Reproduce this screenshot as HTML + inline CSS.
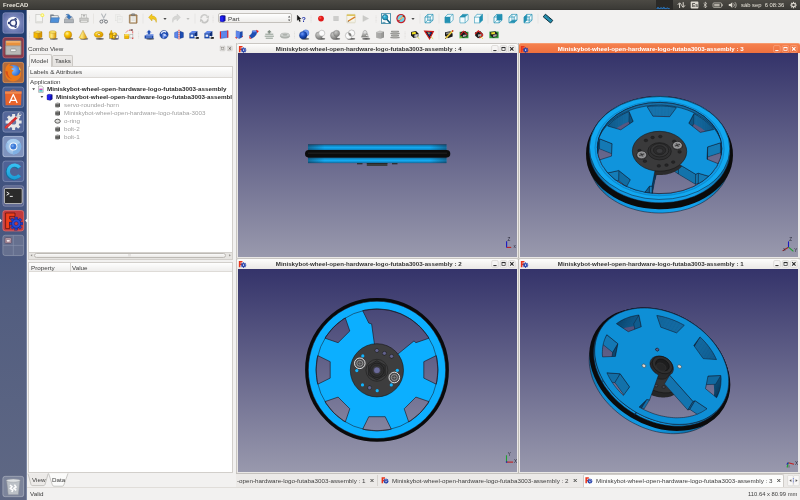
<!DOCTYPE html><html><head><meta charset="utf-8"><title>FreeCAD</title><style>
*{box-sizing:border-box;margin:0;padding:0}
html,body{width:800px;height:500px;overflow:hidden;background:#f2f1f0;font-family:"Liberation Sans",sans-serif;font-size:6.25px;color:#3c3c3c}
.abs{position:absolute}
#panel{position:absolute;left:0;top:0;width:800px;height:10px;background:linear-gradient(#4c4a44,#3c3b37 85%,#33322f);}
.txt{position:absolute;white-space:nowrap;line-height:8px;height:8px;will-change:transform}
.b{font-weight:bold;color:#2b2b2b}
.g{color:#9f9f9f}
.view{position:absolute;background:linear-gradient(#34336a 0%,#9999ad 100%);overflow:hidden}
.mt{position:absolute;background:linear-gradient(#fdfdfc,#eae8e6);border-radius:2px 2px 0 0;border-top:0.6px solid #c9c6c2}
.mt.act{background:linear-gradient(#f5814e,#ee6f3e);border-top:0.6px solid #f79a6e}
.mt .tt{position:absolute;top:1.1px;left:8px;right:25.5px;text-align:center;font-weight:bold;color:#333;font-size:6.17px;line-height:8px;white-space:nowrap;will-change:transform}
.mt.act .tt{color:#fff}
</style></head><body>
<div id="panel"><div class="txt" style="left:3px;top:1.1px;font-weight:bold;color:#e9e5dc;font-size:5.9px;">FreeCAD</div>
<div class="abs" style="left:655.6px;top:0;width:17px;height:10px;background:#2a2927"></div>
<div class="txt" style="left:741.3px;top:1.3px;color:#e8e4da;font-size:5.85px;">sáb sep&nbsp; 6 08:36</div>
<svg class="abs" style="left:650px;top:0" width="150" height="10" viewBox="650 0 150 10"><path d="M656.5,8.6h1v-1h1v1h2v-0.8h1.2v0.8h1.6v-1.2h1v1.2h2.4v-0.6h1.4v0.6h1.6" stroke="#2a7fd0" stroke-width="0.9" fill="none"/><path d="M679.6,8V3.4M677.8,4.8l1.8,-2l1.8,2" stroke="#dfdbd2" stroke-width="1" fill="none"/><path d="M683.2,2.2V6.8M681.4,5.4l1.8,2l1.8,-2" stroke="#dfdbd2" stroke-width="1" fill="none"/><rect x="690.7" y="1.6" width="7.7" height="7" rx="0.8" fill="#dfdbd2"/><text x="692" y="7.2" font-family="Liberation Sans" font-size="5" font-weight="bold" fill="#3c3b37">Es</text><path d="M703.6,3.4l3.2,3l-1.6,1.6v-6l1.6,1.6l-3.2,3" stroke="#dfdbd2" stroke-width="0.7" fill="none"/><rect x="713" y="2.9" width="8.6" height="4.5" rx="1" fill="none" stroke="#cfcbc2" stroke-width="0.7"/><rect x="714.2" y="3.9" width="5.4" height="2.5" fill="#b5b1a8"/><rect x="721.8" y="4.2" width="0.8" height="1.9" fill="#cfcbc2"/><path d="M728.8,4.1h1.5l2,-1.9v5.8l-2,-1.9h-1.5z" fill="#dfdbd2"/><path d="M733.6,3.4a2.4,2.4 0 0 1 0,3.4M734.9,2.2a4,4 0 0 1 0,5.8" stroke="#dfdbd2" stroke-width="0.7" fill="none"/><rect x="-0.6" y="-3.2" width="1.2" height="1.4" fill="#dfdbd2" transform="translate(793.5,5.1) rotate(0)"/><rect x="-0.6" y="-3.2" width="1.2" height="1.4" fill="#dfdbd2" transform="translate(793.5,5.1) rotate(45)"/><rect x="-0.6" y="-3.2" width="1.2" height="1.4" fill="#dfdbd2" transform="translate(793.5,5.1) rotate(90)"/><rect x="-0.6" y="-3.2" width="1.2" height="1.4" fill="#dfdbd2" transform="translate(793.5,5.1) rotate(135)"/><rect x="-0.6" y="-3.2" width="1.2" height="1.4" fill="#dfdbd2" transform="translate(793.5,5.1) rotate(180)"/><rect x="-0.6" y="-3.2" width="1.2" height="1.4" fill="#dfdbd2" transform="translate(793.5,5.1) rotate(225)"/><rect x="-0.6" y="-3.2" width="1.2" height="1.4" fill="#dfdbd2" transform="translate(793.5,5.1) rotate(270)"/><rect x="-0.6" y="-3.2" width="1.2" height="1.4" fill="#dfdbd2" transform="translate(793.5,5.1) rotate(315)"/><circle cx="793.5" cy="5.1" r="1.8" fill="none" stroke="#dfdbd2" stroke-width="1.1"/></svg>
</div>
<svg class="abs" style="left:0;top:10px" width="27" height="490" viewBox="0 10 27 490"><defs><linearGradient id="lbg" x1="0" y1="0" x2="0" y2="1"><stop offset="0" stop-color="#1d386a"/><stop offset="0.12" stop-color="#294577"/><stop offset="0.35" stop-color="#42537f"/><stop offset="0.6" stop-color="#535e80"/><stop offset="1" stop-color="#5f6884"/></linearGradient><radialGradient id="t1" cx="0.5" cy="0.5" r="0.75"><stop offset="0" stop-color="#a0aad6"/><stop offset="0.6" stop-color="#6a78b0"/><stop offset="1" stop-color="#4e5f9c"/></radialGradient><radialGradient id="ffg" cx="0.45" cy="0.35" r="0.7"><stop offset="0" stop-color="#8fc0ff"/><stop offset="0.6" stop-color="#3a78d8"/><stop offset="1" stop-color="#1c3f9a"/></radialGradient><radialGradient id="chg" cx="0.5" cy="0.5" r="0.5"><stop offset="0" stop-color="#d6e8fa"/><stop offset="1" stop-color="#8ab4e2"/></radialGradient><linearGradient id="cg" x1="0" y1="0" x2="0" y2="1"><stop offset="0" stop-color="#38c4f4"/><stop offset="1" stop-color="#1a9ad6"/></linearGradient></defs><rect x="0" y="10" width="27" height="490" fill="url(#lbg)"/><rect x="26.2" y="10" width="0.8" height="490" fill="#8d98b4" opacity="0.8"/><rect x="2.6" y="12.5" width="21.4" height="21" rx="2.6" fill="url(#t1)"/><rect x="2.9" y="12.8" width="20.8" height="20.4" rx="2.4" fill="none" stroke="#ffffff" stroke-opacity="0.35" stroke-width="0.6"/><circle cx="13.3" cy="23" r="6.3" fill="#fafafc"/><circle cx="13.3" cy="23" r="3.1" fill="none" stroke="#2a3a76" stroke-width="1.4"/><circle cx="9" cy="23" r="1.2" fill="#2a3a76"/><circle cx="15.5" cy="19.3" r="1.2" fill="#2a3a76"/><circle cx="15.5" cy="26.7" r="1.2" fill="#2a3a76"/><path d="M10.2,23h1.2M14.6,20.6l0.6,-1M14.6,25.4l0.6,1" stroke="#fafafc" stroke-width="0.7"/><rect x="2.6" y="37.2" width="21.4" height="21" rx="2.6" fill="#8c3b4b"/><rect x="2.9" y="37.5" width="20.8" height="20.4" rx="2.4" fill="none" stroke="#e0a0a8" stroke-opacity="0.6" stroke-width="0.6"/><rect x="5.4" y="40.6" width="15.8" height="14.4" rx="1" fill="#a9a9a7" stroke="#6a6a68" stroke-width="0.5"/><rect x="6.2" y="41.2" width="14.2" height="4.4" fill="#e8903c"/><rect x="6.2" y="41.2" width="14.2" height="1.4" fill="#f4b878"/><rect x="5.8" y="46" width="15" height="8.6" rx="0.6" fill="#b9b9b7" stroke="#8a8a88" stroke-width="0.4"/><rect x="10.6" y="49" width="5.4" height="2.6" rx="0.8" fill="#f2f2f0" stroke="#777" stroke-width="0.5"/><rect x="2.6" y="62" width="21.4" height="21" rx="2.6" fill="#b26b3c"/><rect x="2.9" y="62.3" width="20.8" height="20.4" rx="2.4" fill="none" stroke="#f0c090" stroke-opacity="0.6" stroke-width="0.6"/><circle cx="13.6" cy="72" r="7" fill="url(#ffg)"/><path d="M5.4,70c0,-4 3,-6.4 5.4,-6.6c-1.2,1 -1.4,2 -1.2,2.8c1.6,-0.6 3.6,0 4.2,1.2c-1.6,0 -2.6,0.8 -2.6,1.8c0.8,0.6 2,0.6 2.6,1.6c-1,0.2 -2,1 -2,2.2c0,1.6 1.6,2.8 3.6,2.8c2.6,0 4.8,-2 5.2,-5c0.8,2 0.6,4.8 -0.6,6.8c-1.4,2.4 -4,3.8 -6.8,3.8c-4.6,0 -7.8,-3.6 -7.8,-7.4c0,-1.2 0,-2.6 0,-4z" fill="#ee7a18"/><path d="M5.4,71c0.4,4 2.6,7.2 6.6,8c-3,-1.4 -4.4,-4 -4.2,-7.4z" fill="#d8501a"/><path d="M18.4,66.4c1.6,1.2 2.6,3 2.8,5c-0.6,-1 -1.4,-1.6 -2.2,-1.8c0.2,-1.2 0,-2.2 -0.6,-3.2z" fill="#f8c030"/><rect x="2.6" y="86.7" width="21.4" height="21" rx="2.6" fill="#4a5f92"/><rect x="2.9" y="87.0" width="20.8" height="20.4" rx="2.4" fill="none" stroke="#ffffff" stroke-opacity="0.35" stroke-width="0.6"/><path d="M10,92.4c0,-3 6.6,-3 6.6,0" fill="none" stroke="#e8703a" stroke-width="1"/><path d="M5,91.6h16.6l-0.6,13.6h-15.4z" fill="#e8632a"/><path d="M5,91.6h16.6l-0.1,2.2h-16.4z" fill="#f08a50"/><path d="M9.4,103l3.9,-8.4l3.9,8.4M10.6,100.4h5.4" fill="none" stroke="#fff" stroke-width="1.3" stroke-linejoin="round"/><rect x="2.6" y="111.4" width="21.4" height="21" rx="2.6" fill="#54679a"/><rect x="2.9" y="111.7" width="20.8" height="20.4" rx="2.4" fill="none" stroke="#ffffff" stroke-opacity="0.35" stroke-width="0.6"/><rect x="-1.5" y="-8" width="3" height="3.2" fill="#e4e4e4" transform="translate(13.6,122) rotate(0)"/><rect x="-1.5" y="-8" width="3" height="3.2" fill="#e4e4e4" transform="translate(13.6,122) rotate(45)"/><rect x="-1.5" y="-8" width="3" height="3.2" fill="#e4e4e4" transform="translate(13.6,122) rotate(90)"/><rect x="-1.5" y="-8" width="3" height="3.2" fill="#e4e4e4" transform="translate(13.6,122) rotate(135)"/><rect x="-1.5" y="-8" width="3" height="3.2" fill="#e4e4e4" transform="translate(13.6,122) rotate(180)"/><rect x="-1.5" y="-8" width="3" height="3.2" fill="#e4e4e4" transform="translate(13.6,122) rotate(225)"/><rect x="-1.5" y="-8" width="3" height="3.2" fill="#e4e4e4" transform="translate(13.6,122) rotate(270)"/><rect x="-1.5" y="-8" width="3" height="3.2" fill="#e4e4e4" transform="translate(13.6,122) rotate(315)"/><circle cx="13.6" cy="122" r="6" fill="#e9e9e9"/><circle cx="13.6" cy="122" r="2.6" fill="#6a78a4"/><path d="M6,127.4L16.4,117.6" stroke="#d22a2a" stroke-width="2.6" stroke-linecap="round"/><path d="M6,127.4L12,121.8" stroke="#e85050" stroke-width="1" stroke-linecap="round"/><path d="M16.4,117.6l2.4,-2.6" stroke="#cfcfcf" stroke-width="2"/><circle cx="19.4" cy="114.6" r="2" fill="#dadada"/><circle cx="20" cy="114" r="1" fill="#54679a"/><rect x="2.6" y="136.1" width="21.4" height="21" rx="2.6" fill="#7f93be"/><rect x="2.9" y="136.4" width="20.8" height="20.4" rx="2.4" fill="none" stroke="#ffffff" stroke-opacity="0.5" stroke-width="0.6"/><circle cx="13.4" cy="146.6" r="7.8" fill="url(#chg)"/><path d="M13.4,146.6L6.8,142.6A7.8,7.8 0 0 1 20.2,142.8Z" fill="#a8cdf0"/><path d="M13.4,146.6L20.4,143A7.8,7.8 0 0 1 13,154.4Z" fill="#7fb0e4"/><circle cx="13.4" cy="146.6" r="4" fill="#f4f8fc"/><circle cx="13.4" cy="146.6" r="3" fill="#3d7ad6"/><circle cx="12.6" cy="145.8" r="1.2" fill="#6fa4f0"/><rect x="2.6" y="160.8" width="21.4" height="21" rx="2.6" fill="#4f6296"/><rect x="2.9" y="161.10000000000002" width="20.8" height="20.4" rx="2.4" fill="none" stroke="#ffffff" stroke-opacity="0.35" stroke-width="0.6"/><path d="M21,166.6a8,8 0 1 0 0,9.6l-2.8,-2a4.6,4.6 0 1 1 0,-5.6z" fill="#14709e" transform="translate(-1,0.8)"/><path d="M21,166.6a8,8 0 1 0 0,9.6l-2.8,-2a4.6,4.6 0 1 1 0,-5.6z" fill="url(#cg)"/><rect x="2.6" y="185.5" width="21.4" height="21" rx="2.6" fill="#5b6590"/><rect x="2.9" y="185.8" width="20.8" height="20.4" rx="2.4" fill="none" stroke="#ffffff" stroke-opacity="0.35" stroke-width="0.6"/><rect x="4.4" y="188.4" width="17.8" height="15.2" rx="1.4" fill="#2b2b2b" stroke="#c9c9c7" stroke-width="0.9"/><path d="M6.6,192l2.6,1.6l-2.6,1.6" fill="none" stroke="#fff" stroke-width="0.9"/><path d="M9.8,196.4h3" stroke="#fff" stroke-width="0.9"/><rect x="2.6" y="210.2" width="21.4" height="21" rx="2.6" fill="#c23a3c"/><rect x="2.9" y="210.5" width="20.8" height="20.4" rx="2.4" fill="none" stroke="#f0a0a0" stroke-opacity="0.7" stroke-width="0.6"/><path d="M5.6,213v15.6h4v-6.4h3.6v-3.2h-3.6v-2.6h5.4v-3.4z" fill="#f0401c" stroke="#5a0f08" stroke-width="0.7" stroke-linejoin="round"/><rect x="-1.4" y="-6.6" width="2.8" height="3" fill="#2340c8" stroke="#0c1a60" stroke-width="0.3" transform="translate(16.2,223.6) rotate(0)"/><rect x="-1.4" y="-6.6" width="2.8" height="3" fill="#2340c8" stroke="#0c1a60" stroke-width="0.3" transform="translate(16.2,223.6) rotate(45)"/><rect x="-1.4" y="-6.6" width="2.8" height="3" fill="#2340c8" stroke="#0c1a60" stroke-width="0.3" transform="translate(16.2,223.6) rotate(90)"/><rect x="-1.4" y="-6.6" width="2.8" height="3" fill="#2340c8" stroke="#0c1a60" stroke-width="0.3" transform="translate(16.2,223.6) rotate(135)"/><rect x="-1.4" y="-6.6" width="2.8" height="3" fill="#2340c8" stroke="#0c1a60" stroke-width="0.3" transform="translate(16.2,223.6) rotate(180)"/><rect x="-1.4" y="-6.6" width="2.8" height="3" fill="#2340c8" stroke="#0c1a60" stroke-width="0.3" transform="translate(16.2,223.6) rotate(225)"/><rect x="-1.4" y="-6.6" width="2.8" height="3" fill="#2340c8" stroke="#0c1a60" stroke-width="0.3" transform="translate(16.2,223.6) rotate(270)"/><rect x="-1.4" y="-6.6" width="2.8" height="3" fill="#2340c8" stroke="#0c1a60" stroke-width="0.3" transform="translate(16.2,223.6) rotate(315)"/><circle cx="16.2" cy="223.6" r="4.6" fill="#2a4ad6" stroke="#0c1a60" stroke-width="0.5"/><circle cx="16.2" cy="223.6" r="1.9" fill="#c23a3c" stroke="#0c1a60" stroke-width="0.4"/><polygon points="0,218.8 1.8,220.6 0,222.4" fill="#f4f4f4"/><polygon points="27,218.8 25.2,220.6 27,222.4" fill="#f4f4f4"/><polygon points="0,46 1.8,47.8 0,49.6" fill="#f4f4f4"/><polygon points="0,70.6 1.8,72.4 0,74.2" fill="#d0d4e0"/><rect x="2.6" y="234.9" width="21.4" height="21" rx="2.6" fill="#66708f"/><rect x="2.9" y="235.20000000000002" width="20.8" height="20.4" rx="2.4" fill="none" stroke="#ffffff" stroke-opacity="0.3" stroke-width="0.6"/><path d="M13.3,235.4v20M3,245.4h20.6" stroke="#8a93ad" stroke-width="0.6"/><rect x="5.2" y="238" width="6" height="5" rx="0.5" fill="#c9b9c4" stroke="#5a2a3a" stroke-width="0.5"/><rect x="6.4" y="239.8" width="3.6" height="2.2" fill="#f0e8ec" stroke="#6a3a4a" stroke-width="0.4"/><rect x="2.6" y="476" width="21.4" height="21" rx="2.6" fill="#7c849b"/><rect x="2.9" y="476.3" width="20.8" height="20.4" rx="2.4" fill="none" stroke="#ffffff" stroke-opacity="0.4" stroke-width="0.6"/><path d="M6.6,480.6h13.4l-1.6,14.2h-10.2z" fill="#c4c8cc" stroke="#8a8e94" stroke-width="0.5" opacity="0.9"/><ellipse cx="13.3" cy="480.6" rx="6.9" ry="1.6" fill="#dfe2e4" stroke="#9a9ea4" stroke-width="0.5"/><path d="M10,485l2,1.6l-1.6,2l2.4,1.4l-1,2M14.4,484.6l1.6,2.4l-2,1.4l2.2,2" fill="none" stroke="#fdfdfd" stroke-width="1.6"/></svg>
<svg class="abs" style="left:0;top:10px" width="800" height="34" viewBox="0 10 800 34"><defs><linearGradient id="ycyl" x1="0" y1="0" x2="1" y2="0"><stop offset="0" stop-color="#f9d030"/><stop offset="0.35" stop-color="#fde880"/><stop offset="1" stop-color="#d89400"/></linearGradient><radialGradient id="ysph" cx="0.38" cy="0.32" r="0.7"><stop offset="0" stop-color="#fff0a0"/><stop offset="0.45" stop-color="#f8c400"/><stop offset="1" stop-color="#d08a00"/></radialGradient><radialGradient id="bsph" cx="0.38" cy="0.32" r="0.7"><stop offset="0" stop-color="#6f9af8"/><stop offset="0.5" stop-color="#1f50c0"/><stop offset="1" stop-color="#0a2a78"/></radialGradient><radialGradient id="gsph" cx="0.38" cy="0.32" r="0.75"><stop offset="0" stop-color="#c8c8c6"/><stop offset="0.6" stop-color="#9a9a98"/><stop offset="1" stop-color="#767674"/></radialGradient></defs><rect x="29.2" y="15.600000000000001" width="0.7" height="0.8" fill="#d6d3cf"/><rect x="29.2" y="17.1" width="0.7" height="0.8" fill="#d6d3cf"/><rect x="29.2" y="18.6" width="0.7" height="0.8" fill="#d6d3cf"/><rect x="29.2" y="20.1" width="0.7" height="0.8" fill="#d6d3cf"/><rect x="29.2" y="21.6" width="0.7" height="0.8" fill="#d6d3cf"/><rect x="29.2" y="31.6" width="0.7" height="0.8" fill="#d6d3cf"/><rect x="29.2" y="33.1" width="0.7" height="0.8" fill="#d6d3cf"/><rect x="29.2" y="34.6" width="0.7" height="0.8" fill="#d6d3cf"/><rect x="29.2" y="36.1" width="0.7" height="0.8" fill="#d6d3cf"/><rect x="29.2" y="37.6" width="0.7" height="0.8" fill="#d6d3cf"/><g transform="translate(39.5,18.6) scale(1.0)"><rect x="-3.6" y="-4.3" width="6.6" height="8.6" fill="#f5f5f3" stroke="#b4b4b0" stroke-width="0.5"/><rect x="-3.3" y="2.5" width="6" height="1.5" fill="#dededa"/><circle cx="2.9" cy="-3.4" r="1.9" fill="#f7ee5a"/><circle cx="2.9" cy="-3.4" r="0.9" fill="#fffbc0"/></g><g transform="translate(54.5,18.6) scale(1.0)"><path d="M-4,-3.8h3l0.8,0.9h4v6.6h-7.8z" fill="#7c8795" stroke="#56606c" stroke-width="0.4"/><rect x="-3" y="-2.6" width="6.4" height="3" fill="#e8e8e6"/><path d="M-4.3,4l1.1,-4.9h8.2l-1.2,4.9z" fill="#4d8fd8" stroke="#2f66a8" stroke-width="0.4"/></g><g transform="translate(69,18.6) scale(1.0)"><path d="M-4.4,0.6l1,-2h6.8l1,2v3.6h-8.8z" fill="#c3c7cc" stroke="#8d9298" stroke-width="0.45"/><rect x="-4.4" y="1.2" width="8.8" height="3" fill="#aeb3b9" stroke="#858a90" stroke-width="0.4"/><path d="M-3.2,-3.6c2,-1.6 4.4,-0.8 4.4,1.6h1.5l-2.6,2.6l-2.6,-2.6h1.5c0,-1.3 -0.9,-2 -2.2,-1.6z" fill="#3576c0" stroke="#1f4f8c" stroke-width="0.35"/></g><g transform="translate(84,18.6) scale(1.0)"><rect x="-2.7" y="-4.2" width="5.4" height="4" fill="#f0f0ee" stroke="#a8a8a6" stroke-width="0.45"/><path d="M-1.2,-3.2h2.4M0,-3.2v1.8" stroke="#9a9a98" stroke-width="0.7"/><path d="M-4.3,-0.6h8.6v4h-8.6z" fill="#cbcbc9" stroke="#9d9d9b" stroke-width="0.45"/><rect x="-3.4" y="1.6" width="6.8" height="2.4" fill="#e4e4e2" stroke="#a6a6a4" stroke-width="0.4"/></g><g transform="translate(103.7,18.6) scale(1.0)"><path d="M-2.1,-4.6L1.3,1.8M2.1,-4.6L-1.3,1.8" stroke="#b4b8bc" stroke-width="1.1" stroke-linecap="round"/><circle cx="-2.3" cy="3" r="1.5" fill="none" stroke="#6a6e74" stroke-width="0.9"/><circle cx="2.3" cy="3" r="1.5" fill="none" stroke="#6a6e74" stroke-width="0.9"/></g><g transform="translate(118.7,18.6) scale(1.0)"><rect x="-3.4" y="-3.8" width="4.8" height="6" fill="#efefed" stroke="#dcdcda" stroke-width="0.4"/><rect x="-1.4" y="-2" width="4.8" height="6" fill="#f1f1ef" stroke="#d6d6d4" stroke-width="0.4"/><path d="M-0.4,0h2.8M-0.4,1.2h2.8" stroke="#e0e0de" stroke-width="0.5"/></g><g transform="translate(133.2,18.6) scale(1.0)"><rect x="-3.9" y="-3.9" width="7.8" height="8.6" rx="0.6" fill="#b38b5a" stroke="#7b5b33" stroke-width="0.5"/><rect x="-2.7" y="-2.5" width="5.4" height="6.2" fill="#f4f4f0" stroke="#c9c6bc" stroke-width="0.3"/><path d="M-1.7,-0.8h3.4M-1.7,0.5h3.4M-1.7,1.8h3.4" stroke="#c4c4c0" stroke-width="0.45"/><rect x="-1.7" y="-4.8" width="3.4" height="1.8" rx="0.5" fill="#8f8f8d" stroke="#5e5e5c" stroke-width="0.4"/></g><g transform="translate(153,18.6) scale(1.0)"><path d="M-4.4,-1.4l3.4,-3.2v2c3.6,0 5.2,2.4 4.2,6.4c-0.4,-2.4 -1.6,-3.4 -4.2,-3.4v2z" fill="#f2c81e" stroke="#c49a08" stroke-width="0.4" stroke-linejoin="round"/></g><g transform="translate(176,18.6) scale(1.0)"><g transform="scale(-1,1)"><path d="M-4.4,-1.4l3.4,-3.2v2c3.6,0 5.2,2.4 4.2,6.4c-0.4,-2.4 -1.6,-3.4 -4.2,-3.4v2z" fill="#d6d6d4" stroke="#c6c6c4" stroke-width="0.4" stroke-linejoin="round"/></g></g><g transform="translate(204.5,18.6) scale(1.0)"><path d="M-3.4,-0.4a3.4,3.4 0 0 1 6,-2.2" fill="none" stroke="#cbcbc9" stroke-width="1.7"/><polygon points="1.2,-1.6 4.6,-3.2 4.2,0.4" fill="#cbcbc9"/><path d="M3.4,0.6a3.4,3.4 0 0 1 -6,2.2" fill="none" stroke="#c4c4c2" stroke-width="1.7"/><polygon points="-1.2,1.8 -4.6,3.4 -4.2,-0.2" fill="#c4c4c2"/></g><g transform="translate(300.8,18.6) scale(1.0)"><polygon points="-3.6,-3.6 -3.6,2 -2.3,0.9 -1.3,3.2 -0.3,2.7 -1.3,0.5 0.4,0.4" fill="#111" stroke="#111" stroke-width="0.2"/><text x="0.6" y="3" font-family="Liberation Sans" font-weight="bold" font-size="7.2" fill="#2233a8">?</text></g><g transform="translate(321,18.6) scale(1.0)"><circle r="2.9" fill="#e01818"/><circle cx="-0.7" cy="-0.8" r="1.2" fill="#ff5a4a" opacity="0.8"/></g><g transform="translate(336,18.6) scale(1.0)"><rect x="-2.2" y="-2.2" width="4.4" height="4.4" fill="#cdcdcb" stroke="#b9b9b7" stroke-width="0.4"/></g><g transform="translate(351,18.6) scale(1.0)"><rect x="-4.2" y="-4.2" width="8.4" height="8.4" rx="0.6" fill="#f7f5ea" stroke="#c9c3a4" stroke-width="0.5"/><rect x="-4.2" y="-4.2" width="8.4" height="1.6" fill="#dcc45e"/><path d="M-2.6,2.4L3.8,-1.4" stroke="#d9822b" stroke-width="1.4" stroke-linecap="round"/><path d="M-3.2,2.9l1.1,-0.3" stroke="#444" stroke-width="0.7"/><path d="M-3,3.4h6" stroke="#d8d4c4" stroke-width="0.4"/></g><g transform="translate(365.5,18.6) scale(1.0)"><polygon points="-2.6,-3 3.2,0 -2.6,3" fill="#cbcbc9" stroke="#bdbdbb" stroke-width="0.3"/></g><g transform="translate(386,18.6) scale(1.0)"><rect x="-4.6" y="-4.9" width="9.2" height="9.8" fill="#fdfdfd" stroke="#2c7d9c" stroke-width="0.8"/><path d="M1,0.8L3.6,3.8" stroke="#0f5f80" stroke-width="1.6" stroke-linecap="round"/><circle cx="-0.9" cy="-1.4" r="2.7" fill="#2aa3c8" stroke="#0f5f80" stroke-width="0.7"/><circle cx="-1.5" cy="-2" r="1" fill="#8fe0f2" opacity="0.8"/><path d="M-3.6,3.8h3" stroke="#2c7d9c" stroke-width="0.8"/></g><g transform="translate(401,18.6) scale(1.0)"><circle r="4.1" fill="#6fd6ea" stroke="#c4202a" stroke-width="1.2"/><path d="M-2.9,2.9L2.9,-2.9" stroke="#c4202a" stroke-width="1.2"/><path d="M-2,1.4L2.2,-1.8" stroke="#f2d27a" stroke-width="1.1"/><path d="M2.2,-1.8l1,-0.8" stroke="#7a4a20" stroke-width="1.1"/></g><g transform="translate(548,18.6) scale(1.0)"><g transform="rotate(40)"><rect x="-4.8" y="-1.7" width="9.6" height="3.4" fill="#2492b2" stroke="#0a2a38" stroke-width="0.9"/><path d="M-3,-1.7v1.4M-1,-1.7v1.4M1,-1.7v1.4M3,-1.7v1.4" stroke="#0c3a4c" stroke-width="0.4"/></g></g><g transform="translate(165,18.900000000000002) scale(1.0)"><polygon points="-1.6,-0.9 1.6,-0.9 0,1.1" fill="#4a4a4a"/></g><g transform="translate(188,18.900000000000002) scale(1.0)"><polygon points="-1.6,-0.9 1.6,-0.9 0,1.1" fill="#bdbdbb"/></g><g transform="translate(413,18.900000000000002) scale(1.0)"><polygon points="-1.6,-0.9 1.6,-0.9 0,1.1" fill="#4a4a4a"/></g><rect x="93.45" y="13.600000000000001" width="0.5" height="10" fill="#dcd9d5"/><rect x="142.75" y="13.600000000000001" width="0.5" height="10" fill="#dcd9d5"/><rect x="194.75" y="13.600000000000001" width="0.5" height="10" fill="#dcd9d5"/><rect x="419.75" y="13.600000000000001" width="0.5" height="10" fill="#dcd9d5"/><rect x="438.75" y="13.600000000000001" width="0.5" height="10" fill="#dcd9d5"/><rect x="487.75" y="13.600000000000001" width="0.5" height="10" fill="#dcd9d5"/><rect x="537.75" y="13.600000000000001" width="0.5" height="10" fill="#dcd9d5"/><rect x="212.7" y="15.600000000000001" width="0.7" height="0.8" fill="#d6d3cf"/><rect x="212.7" y="17.1" width="0.7" height="0.8" fill="#d6d3cf"/><rect x="212.7" y="18.6" width="0.7" height="0.8" fill="#d6d3cf"/><rect x="212.7" y="20.1" width="0.7" height="0.8" fill="#d6d3cf"/><rect x="212.7" y="21.6" width="0.7" height="0.8" fill="#d6d3cf"/><rect x="310.7" y="15.600000000000001" width="0.7" height="0.8" fill="#d6d3cf"/><rect x="310.7" y="17.1" width="0.7" height="0.8" fill="#d6d3cf"/><rect x="310.7" y="18.6" width="0.7" height="0.8" fill="#d6d3cf"/><rect x="310.7" y="20.1" width="0.7" height="0.8" fill="#d6d3cf"/><rect x="310.7" y="21.6" width="0.7" height="0.8" fill="#d6d3cf"/><rect x="375.7" y="15.600000000000001" width="0.7" height="0.8" fill="#d6d3cf"/><rect x="375.7" y="17.1" width="0.7" height="0.8" fill="#d6d3cf"/><rect x="375.7" y="18.6" width="0.7" height="0.8" fill="#d6d3cf"/><rect x="375.7" y="20.1" width="0.7" height="0.8" fill="#d6d3cf"/><rect x="375.7" y="21.6" width="0.7" height="0.8" fill="#d6d3cf"/><g transform="translate(429,18.6) scale(1.0)"><polygon points="-4,-1.6 -1.2,-4.2 4,-4.2 4,1.6 1.2,4.2 -4,4.2" fill="#f3fbfd"/><polygon points="-1.2,-4.2 4.0,-4.2 4.0,1.6 -1.2,1.6" fill="#f3fbfd" stroke="#2391b2" stroke-width="0.42" stroke-linejoin="round"/><polygon points="-4.0,4.2 1.2,4.2 4.0,1.6 -1.2,1.6" fill="none" stroke="#2391b2" stroke-width="0.42" stroke-linejoin="round"/><polygon points="-4.0,-1.6 -1.2,-4.2 -1.2,1.6 -4.0,4.2" fill="none" stroke="#2391b2" stroke-width="0.42" stroke-linejoin="round"/><polygon points="-4.0,-1.6 1.2,-1.6 1.2,4.2 -4.0,4.2" fill="none" stroke="#2391b2" stroke-width="0.42" stroke-linejoin="round"/><polygon points="-4.0,-1.6 1.2,-1.6 4.0,-4.2 -1.2,-4.2" fill="none" stroke="#2391b2" stroke-width="0.42" stroke-linejoin="round"/><polygon points="1.2,-1.6 4.0,-4.2 4.0,1.6 1.2,4.2" fill="none" stroke="#2391b2" stroke-width="0.42" stroke-linejoin="round"/></g><g transform="translate(449,18.6) scale(1.0)"><polygon points="-1.2,-4.2 4.0,-4.2 4.0,1.6 -1.2,1.6" fill="#f3fbfd" stroke="#2391b2" stroke-width="0.42" stroke-linejoin="round"/><polygon points="-4.0,4.2 1.2,4.2 4.0,1.6 -1.2,1.6" fill="#f3fbfd" stroke="#2391b2" stroke-width="0.42" stroke-linejoin="round"/><polygon points="-4.0,-1.6 -1.2,-4.2 -1.2,1.6 -4.0,4.2" fill="#f3fbfd" stroke="#2391b2" stroke-width="0.42" stroke-linejoin="round"/><polygon points="-4.0,-1.6 1.2,-1.6 1.2,4.2 -4.0,4.2" fill="#2391b2" stroke="#2391b2" stroke-width="0.42" stroke-linejoin="round"/><polygon points="-4.0,-1.6 1.2,-1.6 4.0,-4.2 -1.2,-4.2" fill="#f3fbfd" stroke="#2391b2" stroke-width="0.42" stroke-linejoin="round"/><polygon points="1.2,-1.6 4.0,-4.2 4.0,1.6 1.2,4.2" fill="#f3fbfd" stroke="#2391b2" stroke-width="0.42" stroke-linejoin="round"/></g><g transform="translate(464,18.6) scale(1.0)"><polygon points="-1.2,-4.2 4.0,-4.2 4.0,1.6 -1.2,1.6" fill="#f3fbfd" stroke="#2391b2" stroke-width="0.42" stroke-linejoin="round"/><polygon points="-4.0,4.2 1.2,4.2 4.0,1.6 -1.2,1.6" fill="#f3fbfd" stroke="#2391b2" stroke-width="0.42" stroke-linejoin="round"/><polygon points="-4.0,-1.6 -1.2,-4.2 -1.2,1.6 -4.0,4.2" fill="#f3fbfd" stroke="#2391b2" stroke-width="0.42" stroke-linejoin="round"/><polygon points="-4.0,-1.6 1.2,-1.6 1.2,4.2 -4.0,4.2" fill="#f3fbfd" stroke="#2391b2" stroke-width="0.42" stroke-linejoin="round"/><polygon points="-4.0,-1.6 1.2,-1.6 4.0,-4.2 -1.2,-4.2" fill="#2391b2" stroke="#2391b2" stroke-width="0.42" stroke-linejoin="round"/><polygon points="1.2,-1.6 4.0,-4.2 4.0,1.6 1.2,4.2" fill="#f3fbfd" stroke="#2391b2" stroke-width="0.42" stroke-linejoin="round"/></g><g transform="translate(478.5,18.6) scale(1.0)"><polygon points="-1.2,-4.2 4.0,-4.2 4.0,1.6 -1.2,1.6" fill="#f3fbfd" stroke="#2391b2" stroke-width="0.42" stroke-linejoin="round"/><polygon points="-4.0,4.2 1.2,4.2 4.0,1.6 -1.2,1.6" fill="#f3fbfd" stroke="#2391b2" stroke-width="0.42" stroke-linejoin="round"/><polygon points="-4.0,-1.6 -1.2,-4.2 -1.2,1.6 -4.0,4.2" fill="#f3fbfd" stroke="#2391b2" stroke-width="0.42" stroke-linejoin="round"/><polygon points="-4.0,-1.6 1.2,-1.6 1.2,4.2 -4.0,4.2" fill="#f3fbfd" stroke="#2391b2" stroke-width="0.42" stroke-linejoin="round"/><polygon points="-4.0,-1.6 1.2,-1.6 4.0,-4.2 -1.2,-4.2" fill="#f3fbfd" stroke="#2391b2" stroke-width="0.42" stroke-linejoin="round"/><polygon points="1.2,-1.6 4.0,-4.2 4.0,1.6 1.2,4.2" fill="#2391b2" stroke="#2391b2" stroke-width="0.42" stroke-linejoin="round"/></g><g transform="translate(498,18.6) scale(1.0)"><polygon points="-1.2,-4.2 4.0,-4.2 4.0,1.6 -1.2,1.6" fill="#2391b2" stroke="#2391b2" stroke-width="0.42" stroke-linejoin="round"/><polygon points="-4.0,4.2 1.2,4.2 4.0,1.6 -1.2,1.6" fill="#f3fbfd" stroke="#2391b2" stroke-width="0.42" stroke-linejoin="round"/><polygon points="-4.0,-1.6 -1.2,-4.2 -1.2,1.6 -4.0,4.2" fill="#f3fbfd" stroke="#2391b2" stroke-width="0.42" stroke-linejoin="round"/><polygon points="-4.0,-1.6 1.2,-1.6 1.2,4.2 -4.0,4.2" fill="none" stroke="#2391b2" stroke-width="0.42" stroke-linejoin="round"/><polygon points="-4.0,-1.6 1.2,-1.6 4.0,-4.2 -1.2,-4.2" fill="none" stroke="#2391b2" stroke-width="0.42" stroke-linejoin="round"/><polygon points="1.2,-1.6 4.0,-4.2 4.0,1.6 1.2,4.2" fill="none" stroke="#2391b2" stroke-width="0.42" stroke-linejoin="round"/></g><g transform="translate(513,18.6) scale(1.0)"><polygon points="-1.2,-4.2 4.0,-4.2 4.0,1.6 -1.2,1.6" fill="#f3fbfd" stroke="#2391b2" stroke-width="0.42" stroke-linejoin="round"/><polygon points="-4.0,4.2 1.2,4.2 4.0,1.6 -1.2,1.6" fill="#2391b2" stroke="#2391b2" stroke-width="0.42" stroke-linejoin="round"/><polygon points="-4.0,-1.6 -1.2,-4.2 -1.2,1.6 -4.0,4.2" fill="#f3fbfd" stroke="#2391b2" stroke-width="0.42" stroke-linejoin="round"/><polygon points="-4.0,-1.6 1.2,-1.6 1.2,4.2 -4.0,4.2" fill="none" stroke="#2391b2" stroke-width="0.42" stroke-linejoin="round"/><polygon points="-4.0,-1.6 1.2,-1.6 4.0,-4.2 -1.2,-4.2" fill="none" stroke="#2391b2" stroke-width="0.42" stroke-linejoin="round"/><polygon points="1.2,-1.6 4.0,-4.2 4.0,1.6 1.2,4.2" fill="none" stroke="#2391b2" stroke-width="0.42" stroke-linejoin="round"/></g><g transform="translate(528,18.6) scale(1.0)"><polygon points="-1.2,-4.2 4.0,-4.2 4.0,1.6 -1.2,1.6" fill="#f3fbfd" stroke="#2391b2" stroke-width="0.42" stroke-linejoin="round"/><polygon points="-4.0,4.2 1.2,4.2 4.0,1.6 -1.2,1.6" fill="#f3fbfd" stroke="#2391b2" stroke-width="0.42" stroke-linejoin="round"/><polygon points="-4.0,-1.6 -1.2,-4.2 -1.2,1.6 -4.0,4.2" fill="#2391b2" stroke="#2391b2" stroke-width="0.42" stroke-linejoin="round"/><polygon points="-4.0,-1.6 1.2,-1.6 1.2,4.2 -4.0,4.2" fill="none" stroke="#2391b2" stroke-width="0.42" stroke-linejoin="round"/><polygon points="-4.0,-1.6 1.2,-1.6 4.0,-4.2 -1.2,-4.2" fill="none" stroke="#2391b2" stroke-width="0.42" stroke-linejoin="round"/><polygon points="1.2,-1.6 4.0,-4.2 4.0,1.6 1.2,4.2" fill="none" stroke="#2391b2" stroke-width="0.42" stroke-linejoin="round"/></g><g transform="translate(38,34.6) scale(1.0)"><ellipse cx="1.2" cy="4.2" rx="4" ry="0.9" fill="#2a2a2a" opacity="0.75"/><polygon points="-4.2,-2.4 0.2,-1.4 0.2,4 -4.2,3" fill="#f4b800" stroke="#a87400" stroke-width="0.35"/><polygon points="0.2,-1.4 4,-2.8 4,2.6 0.2,4" fill="#d99800" stroke="#a87400" stroke-width="0.35"/><polygon points="-4.2,-2.4 -0.4,-3.8 4,-2.8 0.2,-1.4" fill="#fbe468" stroke="#a87400" stroke-width="0.35"/></g><g transform="translate(52.7,34.6) scale(1.0)"><ellipse cx="1.2" cy="4.2" rx="4" ry="0.9" fill="#2a2a2a" opacity="0.75"/><path d="M-3.4,-2.6v5.2a3.4,1.3 0 0 0 6.8,0v-5.2z" fill="url(#ycyl)" stroke="#a87400" stroke-width="0.35"/><ellipse cx="0" cy="-2.6" rx="3.4" ry="1.3" fill="#fbe468" stroke="#a87400" stroke-width="0.35"/></g><g transform="translate(68,34.6) scale(1.0)"><ellipse cx="1.2" cy="4.2" rx="4" ry="0.9" fill="#2a2a2a" opacity="0.75"/><circle cx="0" cy="0.2" r="3.8" fill="url(#ysph)" stroke="#a87400" stroke-width="0.3"/></g><g transform="translate(83,34.6) scale(1.0)"><ellipse cx="1.2" cy="4.2" rx="4" ry="0.9" fill="#2a2a2a" opacity="0.75"/><path d="M0,-4.4L3.8,3a3.8,1.3 0 0 1 -7.6,0z" fill="url(#ycyl)" stroke="#a87400" stroke-width="0.35"/></g><g transform="translate(98.7,34.6) scale(1.0)"><ellipse cx="1.2" cy="4.2" rx="4" ry="0.9" fill="#2a2a2a" opacity="0.75"/><ellipse cx="0" cy="0" rx="4.4" ry="3" fill="url(#ysph)" stroke="#a87400" stroke-width="0.35"/><ellipse cx="0.2" cy="-0.2" rx="1.9" ry="1" fill="#c88a00" stroke="#a87400" stroke-width="0.3"/><ellipse cx="0.2" cy="0.1" rx="1.4" ry="0.6" fill="#f1f0ee"/></g><g transform="translate(113.7,34.6) scale(1.0)"><ellipse cx="1.2" cy="4.2" rx="4" ry="0.9" fill="#2a2a2a" opacity="0.75"/><path d="M-2.4,-4.6L-0.6,-0.4h-3.6z" fill="#f4b800" stroke="#a87400" stroke-width="0.3"/><rect x="-4" y="-0.6" width="3.4" height="4.2" fill="#f4b800" stroke="#5a4a10" stroke-width="0.4"/><circle cx="1" cy="0.2" r="2.2" fill="url(#ysph)" stroke="#a87400" stroke-width="0.3"/><circle cx="0.4" cy="2.6" r="1.8" fill="url(#ysph)" stroke="#5a4a10" stroke-width="0.3"/><circle cx="3" cy="2.4" r="2" fill="none" stroke="#5560a8" stroke-width="0.6"/></g><g transform="translate(128.7,34.6) scale(1.0)"><rect x="-4.2" y="-0.4" width="4.4" height="4.6" fill="#f4b800" stroke="#a87400" stroke-width="0.35"/><rect x="-4.2" y="-0.4" width="4.4" height="1.4" fill="#fbe468"/><rect x="1.2" y="0" width="3" height="3.4" fill="#f4f4f2" stroke="#8a8a88" stroke-width="0.4"/><path d="M-2.6,-2.2L-0.6,-4.2M0.4,-4.4h3.2M4,-3.2v2.4" stroke="#e02020" stroke-width="0.9" stroke-dasharray="1.3,0.8"/><path d="M1.8,-4.6h2.4" stroke="#222" stroke-width="0.9"/><polygon points="4,4.6 3,3.2 5,3.2" fill="#e02020"/></g><g transform="translate(149,34.6) scale(1.0)"><ellipse cx="1.2" cy="4.2" rx="4" ry="0.9" fill="#2a2a2a" opacity="0.75"/><polygon points="-4.2,1 4.2,1 4.2,3.8 -4.2,3.8" fill="#1d4db4" stroke="#0e2f7a" stroke-width="0.3"/><polygon points="-4.2,1 -2,-0.4 4.6,-0.4 4.2,1" fill="#5f86ea"/><path d="M0,-4.8L2.6,-2h-1.4v2.2h-2.4V-2h-1.4z" fill="#1d4db4" stroke="#dfe8ff" stroke-width="0.35"/><path d="M-3,2.4h6" stroke="#cfdcff" stroke-width="0.6"/></g><g transform="translate(164,34.6) scale(1.0)"><circle r="4.2" fill="#1d4db4" stroke="#0e2f7a" stroke-width="0.4"/><path d="M-2.8,-1a3,3 0 0 1 4.8,-1.4" fill="none" stroke="#e8efff" stroke-width="1.2"/><path d="M-1,4V-0.5a2.6,2.6 0 0 1 3.4,2.2" fill="#5f86ea" stroke="#e8efff" stroke-width="0.5"/><circle cx="0.8" cy="0.4" r="1" fill="#cfdcff"/></g><g transform="translate(179,34.6) scale(1.0)"><polygon points="-4.4,-2 -1,-3.4 -1,3.8 -4.4,2.8" fill="#5f86ea" stroke="#1d4db4" stroke-width="0.4"/><polygon points="4.4,-2 1,-3.4 1,3.8 4.4,2.8" fill="#1d4db4" stroke="#0e2f7a" stroke-width="0.4"/><path d="M0,-4.8v9.6" stroke="#e81818" stroke-width="0.9" stroke-dasharray="1.4,0.7"/></g><g transform="translate(194,34.6) scale(1.0)"><polygon points="-4.4,-1.4 0.6,-1.4 0.6,3.6 -4.4,3.6" fill="#1d4db4" stroke="#0e2f7a" stroke-width="0.3"/><polygon points="-4.4,-1.4 -2,-3.6 3.4,-3.6 0.6,-1.4" fill="#5f86ea"/><polygon points="0.6,-1.4 3.4,-3.6 3.4,1.2 0.6,3.6" fill="#0e2f7a"/><rect x="-3.4" y="0" width="2.6" height="2.2" fill="#e8efff"/><rect x="1.6" y="2.4" width="3.2" height="1.8" fill="#1a1a1a"/><rect x="0.4" y="1.4" width="2" height="1.6" fill="#f2f2f2"/></g><g transform="translate(209,34.6) scale(1.0)"><polygon points="-4.4,-1.4 0.6,-1.4 0.6,3.6 -4.4,3.6" fill="#1d4db4" stroke="#0e2f7a" stroke-width="0.3"/><polygon points="-4.4,-1.4 -2,-3.6 3.4,-3.6 0.6,-1.4" fill="#5f86ea"/><polygon points="0.6,-1.4 3.4,-3.6 3.4,1.2 0.6,3.6" fill="#0e2f7a"/><rect x="-3.4" y="0" width="2.6" height="2.2" fill="#e8efff"/><rect x="1.6" y="2.4" width="3.2" height="1.8" fill="#1a1a1a"/><rect x="0.4" y="1.4" width="2" height="1.6" fill="#f2f2f2"/></g><g transform="translate(224,34.6) scale(1.0)"><polygon points="-3.4,-3 3.6,-3.8 3.6,3 -3.4,3.8" fill="#5f86ea" stroke="#1d4db4" stroke-width="0.4"/><path d="M-3.6,-3.2v7.2M3.8,-4v7.2" stroke="#e81818" stroke-width="1.1"/></g><g transform="translate(239,34.6) scale(1.0)"><polygon points="-3,-3.8 1,-2.6 3.4,-3.2 3.4,2.4 0.4,4 -3,2.6" fill="#1d4db4" stroke="#0e2f7a" stroke-width="0.3"/><polygon points="-3,-3.8 1,-2.6 0.4,4 -3,2.6" fill="#5f86ea"/><path d="M-3.2,2.4l0.6,1.6M3.2,2l0.6,-0.2" stroke="#e81818" stroke-width="1"/></g><g transform="translate(254,34.6) scale(1.0)"><path d="M-1.6,-3.8h4.6c0,3.6 -1.6,6 -5.6,7.6l-2,-2.8c2,-1 3,-2.6 3,-4.8z" fill="#1d4db4" stroke="#0e2f7a" stroke-width="0.3"/><path d="M-1.6,-3.8h4.6l-0.6,1.4h-4z" fill="#5f86ea"/><polygon points="2,-4.8 4.8,-3.6 3.4,-1.6" fill="#e81818"/><polygon points="-4.8,1 -2.6,4.4 -4.6,4" fill="#e81818"/></g><g transform="translate(269.3,34.6) scale(1.0)"><path d="M0,-4.6l2.4,2.2h-4.8z" fill="#7e8a80"/><path d="M-1,-2.6h2v1.6h-2z" fill="#7e8a80"/><path d="M-3.6,-0.4h7.2M-4.2,1.6h8.4M-3.2,3.6h6.4" stroke="#8d9a90" stroke-width="1" stroke-linecap="round"/></g><g transform="translate(285,34.6) scale(1.0)"><ellipse cx="0" cy="1.6" rx="4.6" ry="2" fill="#b9bdb9" stroke="#8e928e" stroke-width="0.4"/><ellipse cx="0" cy="0.4" rx="4.6" ry="2" fill="#d3d6d3" stroke="#8e928e" stroke-width="0.4"/><ellipse cx="0" cy="0.2" rx="2.6" ry="1" fill="#aeb2ae"/></g><g transform="translate(304,34.6) scale(1.0)"><ellipse cx="1.2" cy="4.2" rx="4" ry="0.9" fill="#2a2a2a" opacity="0.75"/><circle cx="1.8" cy="-1.6" r="3.2" fill="#6f97ee" stroke="#2d55b8" stroke-width="0.3"/><circle cx="-0.8" cy="0.6" r="3.8" fill="url(#bsph)" stroke="#0e2f7a" stroke-width="0.3"/></g><g transform="translate(320,34.6) scale(1.0)"><ellipse cx="1.2" cy="4.2" rx="4" ry="0.9" fill="#2a2a2a" opacity="0.75"/><circle cx="-1" cy="0.8" r="3.6" fill="url(#gsph)" stroke="#777" stroke-width="0.3"/><circle cx="1.8" cy="-1.4" r="3" fill="#fbfbfb" stroke="#8a8a8a" stroke-width="0.4"/></g><g transform="translate(335,34.6) scale(1.0)"><ellipse cx="1.2" cy="4.2" rx="4" ry="0.9" fill="#2a2a2a" opacity="0.75"/><circle cx="-1" cy="0.8" r="3.6" fill="url(#gsph)" stroke="#777" stroke-width="0.3"/><circle cx="1.6" cy="-1.2" r="3.1" fill="url(#gsph)" stroke="#777" stroke-width="0.3"/></g><g transform="translate(350,34.6) scale(1.0)"><ellipse cx="1.2" cy="4.2" rx="4" ry="0.9" fill="#2a2a2a" opacity="0.75"/><circle cx="-1.2" cy="1" r="3.4" fill="#fbfbfb" stroke="#8a8a8a" stroke-width="0.45"/><circle cx="1.6" cy="-1.4" r="3.2" fill="#fbfbfb" stroke="#8a8a8a" stroke-width="0.45"/><path d="M-1.4,-2.2a3.2,3.2 0 0 0 2.8,3.9a3.4,3.4 0 0 0 -2.8,-3.9z" fill="#7d7d7b"/></g><g transform="translate(365,34.6) scale(1.0)"><ellipse cx="1.2" cy="4.2" rx="4" ry="0.9" fill="#2a2a2a" opacity="0.75"/><path d="M0,-4.2c2,0 2,3 3.8,6.8h-7.6c1.8,-3.8 1.8,-6.8 3.8,-6.8z" fill="url(#gsph)" stroke="#8a8a8a" stroke-width="0.3"/><circle cx="0" cy="-2.4" r="1.8" fill="#dcdcdc" stroke="#9a9a9a" stroke-width="0.3"/><path d="M1,0.6l2.4,1" stroke="#fff" stroke-width="0.8"/></g><g transform="translate(380,34.6) scale(1.0)"><polygon points="-3.8,-2.6 0.4,-1.6 0.4,4.2 -3.8,3.2" fill="#a4a4a2"/><polygon points="0.4,-1.6 4,-3 4,2.8 0.4,4.2" fill="#8c8c8a"/><polygon points="-3.8,-2.6 -0.2,-4 4,-3 0.4,-1.6" fill="#c2c2c0"/><path d="M-2.4,-2v5.6M-1,-1.8v5.6M1.6,-2.2v5.8M2.8,-2.6v5.8" stroke="#b8b8b6" stroke-width="0.4"/></g><g transform="translate(395,34.6) scale(1.0)"><path d="M-3.4,-3h6.8M-4,-1h8M-3.4,1h6.8M-4,3h8" stroke="#949492" stroke-width="1.5" stroke-linecap="round"/><rect x="-2.4" y="-3.6" width="4.8" height="7.4" fill="#a6a6a4" opacity="0.7"/></g><g transform="translate(415,34.6) scale(1.0)"><polygon points="-4,-2.6 1,-3.6 3.4,-1 3.4,2 -1.4,3.4 -4,1" fill="#1a1a1a"/><polygon points="-3.4,-2 0.6,-2.8 1,-0.8 -2.8,0" fill="#f2e020"/><polygon points="-0.6,0 3,-0.6 3,1.8 -0.8,2.6" fill="#a8a8a6"/><path d="M1.6,1.6L4.4,4.2" stroke="#d8d040" stroke-width="0.9"/><circle cx="1.2" cy="1.2" r="1.3" fill="#ddd" stroke="#777" stroke-width="0.4"/></g><g transform="translate(429,34.6) scale(1.0)"><polygon points="-4.4,-3.6 4.4,-3 0.6,4.4" fill="#1a1a2a"/><polygon points="-4.4,-3.6 4.4,-3 0.6,4.4" fill="none" stroke="#d01818" stroke-width="1.1"/><polygon points="-2,-2.4 2.6,-2 0.4,1.6" fill="#2a3a9a"/><polygon points="-1.4,-2 1,-1.8 0,-0.4" fill="#e8d830"/><path d="M1.6,2L4.2,4.2" stroke="#d8d040" stroke-width="0.8"/></g><g transform="translate(449,34.6) scale(1.0)"><polygon points="-4,-2.4 1.4,-3.4 3.6,-0.8 3.6,2 -1.2,3.6 -4,1.2" fill="#1a1a1a"/><polygon points="-3.2,-1.8 0.6,-2.6 1,-0.8 -2.6,0" fill="#8a8a88"/><path d="M-3,3.4L3.6,-3.6" stroke="#f0d040" stroke-width="1.6" stroke-linecap="round"/><path d="M3,-3L4.2,-4.2" stroke="#c02020" stroke-width="1.4"/><path d="M-3.6,4l0.8,-0.8" stroke="#222" stroke-width="1"/></g><g transform="translate(464,34.6) scale(1.0)"><rect x="-4.4" y="-2.8" width="8.8" height="6.4" fill="#2f9a3a"/><polygon points="-3.4,-2.6 1.4,-3.6 3.4,-1 3.4,1.8 -1,3.2 -3.4,0.8" fill="#1a1a1a"/><path d="M-3.6,0.4L-0.6,-3.4L3.4,0" fill="none" stroke="#d82020" stroke-width="1.1"/><polygon points="-1,0.4 2.4,-0.2 2.4,1.6 -1,2.4" fill="#a8a8a6"/><path d="M-4,3.8L-2,1.8" stroke="#e8d830" stroke-width="0.8"/></g><g transform="translate(479,34.6) scale(1.0)"><polygon points="-3.8,-2.4 1.2,-3.6 3.6,-1 3.6,2 -1,3.6 -3.8,1.2" fill="#1a1a1a"/><path d="M-4,-0.4L-0.6,-3.8L3.8,0.4L0.4,3.6" fill="none" stroke="#d82020" stroke-width="1.1"/><polygon points="-1,0 2.4,-0.6 2.4,1.4 -1,2.2" fill="#a8a8a6"/><path d="M1.4,2L4,4.2" stroke="#e8d830" stroke-width="0.8"/></g><g transform="translate(494,34.6) scale(1.0)"><rect x="-4.6" y="-3" width="9.2" height="6.6" fill="#2f9a3a"/><polygon points="-3.6,-2.6 1.4,-3.4 3.4,-1 3.4,1.8 -1,3.2 -3.6,0.8" fill="#1a1a1a"/><polygon points="-3,-2 0.8,-2.6 1.2,-0.8 -2.4,-0.2" fill="#e8e030"/><polygon points="-0.8,0.2 2.6,-0.4 2.6,1.6 -0.8,2.4" fill="#a8a8a6"/></g><rect x="138.39999999999998" y="31.6" width="0.7" height="0.8" fill="#d6d3cf"/><rect x="138.39999999999998" y="33.1" width="0.7" height="0.8" fill="#d6d3cf"/><rect x="138.39999999999998" y="34.6" width="0.7" height="0.8" fill="#d6d3cf"/><rect x="138.39999999999998" y="36.1" width="0.7" height="0.8" fill="#d6d3cf"/><rect x="138.39999999999998" y="37.6" width="0.7" height="0.8" fill="#d6d3cf"/><rect x="294.2" y="31.6" width="0.7" height="0.8" fill="#d6d3cf"/><rect x="294.2" y="33.1" width="0.7" height="0.8" fill="#d6d3cf"/><rect x="294.2" y="34.6" width="0.7" height="0.8" fill="#d6d3cf"/><rect x="294.2" y="36.1" width="0.7" height="0.8" fill="#d6d3cf"/><rect x="294.2" y="37.6" width="0.7" height="0.8" fill="#d6d3cf"/><rect x="404.7" y="31.6" width="0.7" height="0.8" fill="#d6d3cf"/><rect x="404.7" y="33.1" width="0.7" height="0.8" fill="#d6d3cf"/><rect x="404.7" y="34.6" width="0.7" height="0.8" fill="#d6d3cf"/><rect x="404.7" y="36.1" width="0.7" height="0.8" fill="#d6d3cf"/><rect x="404.7" y="37.6" width="0.7" height="0.8" fill="#d6d3cf"/><rect x="438.75" y="29.6" width="0.5" height="10" fill="#dcd9d5"/></svg>
<div class="abs" style="left:217.5px;top:13.3px;width:74px;height:10.2px;border:0.6px solid #c4c1bc;border-radius:2px;background:linear-gradient(#fefefe,#eeedeb)"></div>
<div class="txt" style="left:227.5px;top:14.5px;">Part</div>
<svg class="abs" style="left:217px;top:13px" width="76" height="11" viewBox="217 13 76 11"><polygon points="220.2,16.2 222,15.4 225.2,15.8 225.2,20.8 223.2,21.8 220.2,21.2" fill="#1010c8" stroke="#05054a" stroke-width="0.5" stroke-linejoin="round"/><polygon points="220.2,16.2 223.2,16.8 223.2,21.8 220.2,21.2" fill="#2222f0"/><polygon points="288,17.4 289.2,15.8 290.4,17.4" fill="#555"/><polygon points="288,19.6 289.2,21.2 290.4,19.6" fill="#555"/></svg>
<div class="txt" style="left:28px;top:44.5px;">Combo View</div>
<svg class="abs" style="left:219px;top:45px" width="15" height="7" viewBox="219 45 15 7"><rect x="220.2" y="46.2" width="4.8" height="4.6" fill="#e4e2df" stroke="#a9a6a2" stroke-width="0.5" stroke-dasharray="0.8,0.5"/><rect x="221.6" y="47.5" width="2.2" height="2" fill="none" stroke="#8a8783" stroke-width="0.5"/><rect x="227.4" y="46.2" width="4.8" height="4.6" fill="#e4e2df" stroke="#a9a6a2" stroke-width="0.5" stroke-dasharray="0.8,0.5"/><path d="M228.6,47.3l2.4,2.4M231,47.3l-2.4,2.4" stroke="#55524e" stroke-width="0.8"/></svg>
<div class="abs" style="left:28.3px;top:66px;width:204.7px;height:193.5px;border:0.6px solid #d2cfcb;background:#f2f1f0"></div>
<div class="abs" style="left:28.5px;top:54px;width:23.3px;height:12.6px;border:0.6px solid #cdcac6;border-bottom:none;border-radius:2px 2px 0 0;background:#f6f5f4"></div>
<div class="abs" style="left:51.8px;top:55.4px;width:21.4px;height:10.7px;border:0.6px solid #cdcac6;border-bottom:none;border-radius:2px 2px 0 0;background:linear-gradient(#eceae8,#e4e2df)"></div>
<div class="txt" style="left:31.2px;top:56.6px;">Model</div>
<div class="txt" style="left:55px;top:56.8px;">Tasks</div>
<div class="abs" style="left:28.9px;top:66.6px;width:203.6px;height:11px;background:linear-gradient(#fefefe,#efeeed);border-bottom:0.6px solid #dcd9d5"></div>
<div class="txt" style="left:30px;top:68.3px;">Labels &amp; Attributes</div>
<div class="abs" style="left:28.9px;top:77.6px;width:203.6px;height:174px;background:#fff;"></div>
<div class="txt" style="left:30px;top:77.6px;">Application</div>
<div class="abs" style="left:29px;top:78px;width:203.2px;height:173px;overflow:hidden">
<div class="txt b" style="left:18.1px;top:7.299999999999997px;">Miniskybot-wheel-open-hardware-logo-futaba3003-assembly</div>
<div class="txt b" style="left:26.799999999999997px;top:15.200000000000003px;">Miniskybot-wheel-open-hardware-logo-futaba3003-assembly</div>
<div class="txt g" style="left:35px;top:23.099999999999994px;">servo-rounded-horn</div>
<div class="txt g" style="left:35px;top:31.099999999999994px;">Miniskybot-wheel-open-hardware-logo-futaba-3003</div>
<div class="txt g" style="left:35px;top:39.2px;">o-ring</div>
<div class="txt g" style="left:35px;top:47.099999999999994px;">bolt-2</div>
<div class="txt g" style="left:35px;top:55.0px;">bolt-1</div>
</div>
<svg class="abs" style="left:29px;top:78px" width="60" height="64" viewBox="29 78 60 64"><polygon points="32.2,88.2 35,88.2 33.6,90.2" fill="#4a4a4a"/><polygon points="40.5,96.1 43.3,96.1 41.9,98.1" fill="#4a4a4a"/><path d="M38.6,86h3.2l1.4,1.4v5h-4.6z" fill="#fbfbfb" stroke="#7a7a7a" stroke-width="0.5"/><rect x="39.3" y="88.6" width="3.2" height="1.4" fill="#c050c0"/><rect x="39.3" y="90.2" width="3.2" height="1.4" fill="#30c0c0"/><polygon points="47.2,95 49,94.3 52.2,94.7 52.2,99.2 50.2,100.2 47.2,99.6" fill="#0e0ec0" stroke="#04043a" stroke-width="0.5" stroke-linejoin="round"/><polygon points="47.2,95 50.2,95.6 50.2,100.2 47.2,99.6" fill="#2020ee"/><polygon points="47.2,95 49,94.3 52.2,94.7 50.2,95.6" fill="#4a4af8"/><g transform="translate(57.6,105)"><polygon points="-2.4,-1.6 0.6,-1.2 0.6,2.6 -2.4,2.2" fill="#6e6e6c"/><polygon points="0.6,-1.2 2.4,-2 2.4,1.8 0.6,2.6" fill="#555553"/><polygon points="-2.4,-1.6 -0.4,-2.6 2.4,-2 0.6,-1.2" fill="#8c8c8a"/><path d="M-2.4,0.3l3,0.4l1.8,-0.8" stroke="#3a3a3a" stroke-width="0.35" fill="none"/></g><g transform="translate(57.6,113.1)"><polygon points="-2.4,-1.6 0.6,-1.2 0.6,2.6 -2.4,2.2" fill="#6e6e6c"/><polygon points="0.6,-1.2 2.4,-2 2.4,1.8 0.6,2.6" fill="#555553"/><polygon points="-2.4,-1.6 -0.4,-2.6 2.4,-2 0.6,-1.2" fill="#8c8c8a"/><path d="M-2.4,0.3l3,0.4l1.8,-0.8" stroke="#3a3a3a" stroke-width="0.35" fill="none"/></g><g transform="translate(57.6,129.1)"><polygon points="-2.4,-1.6 0.6,-1.2 0.6,2.6 -2.4,2.2" fill="#6e6e6c"/><polygon points="0.6,-1.2 2.4,-2 2.4,1.8 0.6,2.6" fill="#555553"/><polygon points="-2.4,-1.6 -0.4,-2.6 2.4,-2 0.6,-1.2" fill="#8c8c8a"/><path d="M-2.4,0.3l3,0.4l1.8,-0.8" stroke="#3a3a3a" stroke-width="0.35" fill="none"/></g><g transform="translate(57.6,137)"><polygon points="-2.4,-1.6 0.6,-1.2 0.6,2.6 -2.4,2.2" fill="#6e6e6c"/><polygon points="0.6,-1.2 2.4,-2 2.4,1.8 0.6,2.6" fill="#555553"/><polygon points="-2.4,-1.6 -0.4,-2.6 2.4,-2 0.6,-1.2" fill="#8c8c8a"/><path d="M-2.4,0.3l3,0.4l1.8,-0.8" stroke="#3a3a3a" stroke-width="0.35" fill="none"/></g><ellipse cx="57.6" cy="121.2" rx="2.7" ry="2" fill="#dcdcda" stroke="#4c4c4a" stroke-width="0.9"/></svg>
<div class="abs" style="left:28.9px;top:251.6px;width:203.6px;height:7px;background:#e6e4e1;border-top:0.6px solid #d4d1cd"></div>
<div class="abs" style="left:33.6px;top:252.7px;width:192.5px;height:5px;border-radius:2.5px;border:0.6px solid #bdbab5;background:linear-gradient(#fbfbfa,#e9e7e5)"></div>
<svg class="abs" style="left:29px;top:252px" width="204" height="7" viewBox="29 252 204 7"><polygon points="32.2,254.2 30.6,255.3 32.2,256.4" fill="#8a8783"/><polygon points="229.2,254.2 230.8,255.3 229.2,256.4" fill="#8a8783"/><path d="M128,254.6h3M128,255.8h3" stroke="#c4c1bc" stroke-width="0.4"/></svg>
<div class="abs" style="left:28.3px;top:262px;width:204.7px;height:211.3px;border:0.6px solid #d2cfcb;background:#fff"></div>
<div class="abs" style="left:28.9px;top:262.6px;width:203.5px;height:9.7px;background:linear-gradient(#fefefe,#efeeed);border-bottom:0.6px solid #dedbd7"></div>
<div class="abs" style="left:70.4px;top:262.6px;width:0.6px;height:9.7px;background:#d6d3cf"></div>
<div class="txt" style="left:31px;top:263.6px;">Property</div>
<div class="txt" style="left:72.4px;top:263.6px;">Value</div>
<svg class="abs" style="left:27px;top:473px" width="80" height="15" viewBox="27 473 80 15"><path d="M28,473.6L31,484.6Q31.4,485.6 32.6,485.6H43.4Q44.6,485.6 45,484.6L48.2,473.6" fill="#eceae8" stroke="#aaa7a2" stroke-width="0.6"/><path d="M48.6,473.4L52.4,485Q52.8,486.2 54,486.2H62.2Q63.4,486.2 63.8,485L68,473.4" fill="#fbfbfa" stroke="#aaa7a2" stroke-width="0.6"/></svg>
<div class="txt" style="left:32.4px;top:476px;">View</div>
<div class="txt" style="left:52.4px;top:476.4px;">Data</div>
<div class="abs" style="left:27px;top:487.4px;width:773px;height:0.6px;background:#e0ddd9"></div>
<div class="txt" style="left:29.8px;top:489.8px;">Valid</div>
<div class="txt" style="left:727px;top:489.9px;width:70.4px;text-align:right;font-size:5.82px">110.64 x 80.99 mm</div>
<div class="abs" style="left:236px;top:43px;width:564px;height:431px;background:#e9e7e5"></div>
<div class="abs" style="left:517.6px;top:43px;width:1px;height:430px;background:#bebbb7"></div>
<div class="abs" style="left:236px;top:43px;width:0.8px;height:430px;background:#c9c6c2"></div>
<div class="abs" style="left:236px;top:257.6px;width:564px;height:0.8px;background:#d0cdc9"></div>
<div class="abs" style="left:236px;top:472.6px;width:564px;height:0.8px;background:#c4c1bd"></div>
<div class="mt" style="left:236.6px;top:43.3px;width:281px;height:9.9px"><div class="tt">Miniskybot-wheel-open-hardware-logo-futaba3003-assembly : 4</div>
<svg class="abs" style="left:0;top:0" width="281" height="9.9" viewBox="0 0 281 9.9"><g transform="translate(1.8,1.9)"><g><path d="M0,0h3.6v1.5h-2v1.2h1.5v1.4h-1.5v2.3h-1.6z" fill="#e8331a"/><rect x="-0.55" y="-2.7" width="1.1" height="1.2" fill="#1c3aa8" transform="translate(4.7,4.2) rotate(0)"/><rect x="-0.55" y="-2.7" width="1.1" height="1.2" fill="#1c3aa8" transform="translate(4.7,4.2) rotate(45)"/><rect x="-0.55" y="-2.7" width="1.1" height="1.2" fill="#1c3aa8" transform="translate(4.7,4.2) rotate(90)"/><rect x="-0.55" y="-2.7" width="1.1" height="1.2" fill="#1c3aa8" transform="translate(4.7,4.2) rotate(135)"/><rect x="-0.55" y="-2.7" width="1.1" height="1.2" fill="#1c3aa8" transform="translate(4.7,4.2) rotate(180)"/><rect x="-0.55" y="-2.7" width="1.1" height="1.2" fill="#1c3aa8" transform="translate(4.7,4.2) rotate(225)"/><rect x="-0.55" y="-2.7" width="1.1" height="1.2" fill="#1c3aa8" transform="translate(4.7,4.2) rotate(270)"/><rect x="-0.55" y="-2.7" width="1.1" height="1.2" fill="#1c3aa8" transform="translate(4.7,4.2) rotate(315)"/><circle cx="4.7" cy="4.2" r="1.9" fill="#1c3aa8"/><circle cx="4.7" cy="4.2" r="0.8" fill="#e8e8f4"/></g></g><rect x="254.7" y="1.5" width="6.6" height="6.9" rx="1.4" fill="#f6f5f4" stroke="#cbc8c4" stroke-width="0.55"/><path d="M256.4,6.6h3.2" stroke="#2a2a2a" stroke-width="1"/><rect x="263.3" y="1.5" width="6.6" height="6.9" rx="1.4" fill="#f6f5f4" stroke="#cbc8c4" stroke-width="0.55"/><rect x="265.0" y="3.3" width="3.2" height="3.3" fill="none" stroke="#2a2a2a" stroke-width="0.7"/><path d="M265.0,3.6h3.2" stroke="#2a2a2a" stroke-width="1"/><rect x="271.59999999999997" y="1.5" width="6.6" height="6.9" rx="1.4" fill="#f6f5f4" stroke="#cbc8c4" stroke-width="0.55"/><path d="M273.2,3.2l3.4,3.5M276.59999999999997,3.2l-3.4,3.5" stroke="#2a2a2a" stroke-width="1.1"/></svg></div>
<div class="mt act" style="left:518.6px;top:43.3px;width:281px;height:9.9px"><div class="tt">Miniskybot-wheel-open-hardware-logo-futaba3003-assembly : 3</div>
<svg class="abs" style="left:0;top:0" width="281" height="9.9" viewBox="0 0 281 9.9"><g transform="translate(1.8,1.9)"><g><path d="M0,0h3.6v1.5h-2v1.2h1.5v1.4h-1.5v2.3h-1.6z" fill="#e8331a"/><rect x="-0.55" y="-2.7" width="1.1" height="1.2" fill="#1c3aa8" transform="translate(4.7,4.2) rotate(0)"/><rect x="-0.55" y="-2.7" width="1.1" height="1.2" fill="#1c3aa8" transform="translate(4.7,4.2) rotate(45)"/><rect x="-0.55" y="-2.7" width="1.1" height="1.2" fill="#1c3aa8" transform="translate(4.7,4.2) rotate(90)"/><rect x="-0.55" y="-2.7" width="1.1" height="1.2" fill="#1c3aa8" transform="translate(4.7,4.2) rotate(135)"/><rect x="-0.55" y="-2.7" width="1.1" height="1.2" fill="#1c3aa8" transform="translate(4.7,4.2) rotate(180)"/><rect x="-0.55" y="-2.7" width="1.1" height="1.2" fill="#1c3aa8" transform="translate(4.7,4.2) rotate(225)"/><rect x="-0.55" y="-2.7" width="1.1" height="1.2" fill="#1c3aa8" transform="translate(4.7,4.2) rotate(270)"/><rect x="-0.55" y="-2.7" width="1.1" height="1.2" fill="#1c3aa8" transform="translate(4.7,4.2) rotate(315)"/><circle cx="4.7" cy="4.2" r="1.9" fill="#1c3aa8"/><circle cx="4.7" cy="4.2" r="0.8" fill="#e8e8f4"/></g></g><rect x="254.7" y="1.5" width="6.6" height="6.9" rx="1.4" fill="none" stroke="#fbb08e" stroke-width="0.55"/><path d="M256.4,6.6h3.2" stroke="#ffffff" stroke-width="1"/><rect x="263.3" y="1.5" width="6.6" height="6.9" rx="1.4" fill="none" stroke="#fbb08e" stroke-width="0.55"/><rect x="265.0" y="3.3" width="3.2" height="3.3" fill="none" stroke="#ffffff" stroke-width="0.7"/><path d="M265.0,3.6h3.2" stroke="#ffffff" stroke-width="1"/><rect x="271.59999999999997" y="1.5" width="6.6" height="6.9" rx="1.4" fill="none" stroke="#fbb08e" stroke-width="0.55"/><path d="M273.2,3.2l3.4,3.5M276.59999999999997,3.2l-3.4,3.5" stroke="#ffffff" stroke-width="1.1"/></svg></div>
<div class="mt" style="left:236.6px;top:258.4px;width:281px;height:10.3px"><div class="tt">Miniskybot-wheel-open-hardware-logo-futaba3003-assembly : 2</div>
<svg class="abs" style="left:0;top:0" width="281" height="10.3" viewBox="0 0 281 10.3"><g transform="translate(1.8,1.9)"><g><path d="M0,0h3.6v1.5h-2v1.2h1.5v1.4h-1.5v2.3h-1.6z" fill="#e8331a"/><rect x="-0.55" y="-2.7" width="1.1" height="1.2" fill="#1c3aa8" transform="translate(4.7,4.2) rotate(0)"/><rect x="-0.55" y="-2.7" width="1.1" height="1.2" fill="#1c3aa8" transform="translate(4.7,4.2) rotate(45)"/><rect x="-0.55" y="-2.7" width="1.1" height="1.2" fill="#1c3aa8" transform="translate(4.7,4.2) rotate(90)"/><rect x="-0.55" y="-2.7" width="1.1" height="1.2" fill="#1c3aa8" transform="translate(4.7,4.2) rotate(135)"/><rect x="-0.55" y="-2.7" width="1.1" height="1.2" fill="#1c3aa8" transform="translate(4.7,4.2) rotate(180)"/><rect x="-0.55" y="-2.7" width="1.1" height="1.2" fill="#1c3aa8" transform="translate(4.7,4.2) rotate(225)"/><rect x="-0.55" y="-2.7" width="1.1" height="1.2" fill="#1c3aa8" transform="translate(4.7,4.2) rotate(270)"/><rect x="-0.55" y="-2.7" width="1.1" height="1.2" fill="#1c3aa8" transform="translate(4.7,4.2) rotate(315)"/><circle cx="4.7" cy="4.2" r="1.9" fill="#1c3aa8"/><circle cx="4.7" cy="4.2" r="0.8" fill="#e8e8f4"/></g></g><rect x="254.7" y="1.5" width="6.6" height="6.9" rx="1.4" fill="#f6f5f4" stroke="#cbc8c4" stroke-width="0.55"/><path d="M256.4,6.6h3.2" stroke="#2a2a2a" stroke-width="1"/><rect x="263.3" y="1.5" width="6.6" height="6.9" rx="1.4" fill="#f6f5f4" stroke="#cbc8c4" stroke-width="0.55"/><rect x="265.0" y="3.3" width="3.2" height="3.3" fill="none" stroke="#2a2a2a" stroke-width="0.7"/><path d="M265.0,3.6h3.2" stroke="#2a2a2a" stroke-width="1"/><rect x="271.59999999999997" y="1.5" width="6.6" height="6.9" rx="1.4" fill="#f6f5f4" stroke="#cbc8c4" stroke-width="0.55"/><path d="M273.2,3.2l3.4,3.5M276.59999999999997,3.2l-3.4,3.5" stroke="#2a2a2a" stroke-width="1.1"/></svg></div>
<div class="mt" style="left:518.6px;top:258.4px;width:281px;height:10.3px"><div class="tt">Miniskybot-wheel-open-hardware-logo-futaba3003-assembly : 1</div>
<svg class="abs" style="left:0;top:0" width="281" height="10.3" viewBox="0 0 281 10.3"><g transform="translate(1.8,1.9)"><g><path d="M0,0h3.6v1.5h-2v1.2h1.5v1.4h-1.5v2.3h-1.6z" fill="#e8331a"/><rect x="-0.55" y="-2.7" width="1.1" height="1.2" fill="#1c3aa8" transform="translate(4.7,4.2) rotate(0)"/><rect x="-0.55" y="-2.7" width="1.1" height="1.2" fill="#1c3aa8" transform="translate(4.7,4.2) rotate(45)"/><rect x="-0.55" y="-2.7" width="1.1" height="1.2" fill="#1c3aa8" transform="translate(4.7,4.2) rotate(90)"/><rect x="-0.55" y="-2.7" width="1.1" height="1.2" fill="#1c3aa8" transform="translate(4.7,4.2) rotate(135)"/><rect x="-0.55" y="-2.7" width="1.1" height="1.2" fill="#1c3aa8" transform="translate(4.7,4.2) rotate(180)"/><rect x="-0.55" y="-2.7" width="1.1" height="1.2" fill="#1c3aa8" transform="translate(4.7,4.2) rotate(225)"/><rect x="-0.55" y="-2.7" width="1.1" height="1.2" fill="#1c3aa8" transform="translate(4.7,4.2) rotate(270)"/><rect x="-0.55" y="-2.7" width="1.1" height="1.2" fill="#1c3aa8" transform="translate(4.7,4.2) rotate(315)"/><circle cx="4.7" cy="4.2" r="1.9" fill="#1c3aa8"/><circle cx="4.7" cy="4.2" r="0.8" fill="#e8e8f4"/></g></g><rect x="254.7" y="1.5" width="6.6" height="6.9" rx="1.4" fill="#f6f5f4" stroke="#cbc8c4" stroke-width="0.55"/><path d="M256.4,6.6h3.2" stroke="#2a2a2a" stroke-width="1"/><rect x="263.3" y="1.5" width="6.6" height="6.9" rx="1.4" fill="#f6f5f4" stroke="#cbc8c4" stroke-width="0.55"/><rect x="265.0" y="3.3" width="3.2" height="3.3" fill="none" stroke="#2a2a2a" stroke-width="0.7"/><path d="M265.0,3.6h3.2" stroke="#2a2a2a" stroke-width="1"/><rect x="271.59999999999997" y="1.5" width="6.6" height="6.9" rx="1.4" fill="#f6f5f4" stroke="#cbc8c4" stroke-width="0.55"/><path d="M273.2,3.2l3.4,3.5M276.59999999999997,3.2l-3.4,3.5" stroke="#2a2a2a" stroke-width="1.1"/></svg></div>
<div class="view" style="left:237.8px;top:53.1px;width:278.8px;height:204.2px"></div>
<div class="view" style="left:519.9px;top:53.1px;width:277.9px;height:204.2px"></div>
<div class="view" style="left:237.8px;top:268.6px;width:278.8px;height:203.8px"></div>
<div class="view" style="left:519.9px;top:268.6px;width:277.9px;height:203.8px"></div>
<svg class="abs" style="left:238px;top:53px" width="278.5" height="204" viewBox="238 53 278.5 204"><defs><linearGradient id="w4a" x1="0" y1="0" x2="0" y2="1"><stop offset="0" stop-color="#0d4468"/><stop offset="0.12" stop-color="#1377ae"/><stop offset="0.55" stop-color="#13adf6"/><stop offset="0.85" stop-color="#0f86c2"/><stop offset="1" stop-color="#0a3a55"/></linearGradient><linearGradient id="w4b" x1="0" y1="0" x2="0" y2="1"><stop offset="0" stop-color="#0a3a55"/><stop offset="0.25" stop-color="#1190d0"/><stop offset="0.6" stop-color="#13adf6"/><stop offset="0.9" stop-color="#1278b0"/><stop offset="1" stop-color="#0d4468"/></linearGradient><linearGradient id="w4h" x1="0" y1="0" x2="1" y2="0"><stop offset="0" stop-color="#102030" stop-opacity="0.45"/><stop offset="0.12" stop-color="#102030" stop-opacity="0"/><stop offset="0.88" stop-color="#102030" stop-opacity="0"/><stop offset="1" stop-color="#102030" stop-opacity="0.45"/></linearGradient></defs><rect x="308" y="144.4" width="138.5" height="6" fill="url(#w4a)"/><rect x="308" y="157.2" width="138.5" height="5.9" fill="url(#w4b)"/><rect x="308" y="144.4" width="138.5" height="18.7" fill="url(#w4h)"/><rect x="305" y="150" width="145.3" height="7.6" rx="3.8" fill="#0c0c0c"/><rect x="308" y="152.5" width="139" height="1.6" fill="#1a1a1a"/><rect x="366.8" y="163.1" width="20.6" height="2.9" fill="#3b3b3d"/><rect x="366.8" y="163.1" width="20.6" height="0.8" fill="#222"/><rect x="357" y="163.1" width="5.5" height="1.2" fill="#2a2a2a"/><rect x="392" y="163.1" width="5.5" height="1.2" fill="#2a2a2a"/></svg><svg class="abs" style="left:238px;top:268.7px" width="278.5" height="203.5" viewBox="238 268.7 278.5 203.5"><circle cx="377.0" cy="369.6" r="70.10000000000001" fill="none" stroke="#0a0a0a" stroke-width="3.6000000000000028"/><path d="M308.3,369.6 a68.7,68.7 0 1,0 137.4,0 a68.7,68.7 0 1,0 -137.4,0 Z M436.2,383.9 L436.7,381.7 L437.1,379.6 L437.4,377.4 L437.6,375.2 L437.8,372.9 L437.9,370.7 L437.9,368.5 L437.8,366.3 L437.6,364.0 L437.4,361.8 L437.1,359.6 L436.7,357.5 L436.2,355.3 L423.8,361.4 L423.8,377.8Z M345.3,317.6 L343.4,318.8 L341.6,320.1 L339.8,321.4 L338.0,322.8 L336.4,324.2 L334.7,325.8 L333.2,327.3 L331.6,329.0 L330.2,330.6 L328.8,332.4 L327.5,334.2 L326.2,336.0 L325.0,337.9 L338.1,342.4 L349.8,330.7Z M317.8,355.3 L317.3,357.5 L316.9,359.6 L316.6,361.8 L316.4,364.0 L316.2,366.3 L316.1,368.5 L316.1,370.7 L316.2,372.9 L316.4,375.2 L316.6,377.4 L316.9,379.6 L317.3,381.7 L317.8,383.9 L330.2,377.8 L330.2,361.4Z M325.0,401.3 L326.2,403.2 L327.5,405.0 L328.8,406.8 L330.2,408.6 L331.6,410.2 L333.2,411.9 L334.7,413.4 L336.4,415.0 L338.0,416.4 L339.8,417.8 L341.6,419.1 L343.4,420.4 L345.3,421.6 L349.8,408.5 L338.1,396.8Z M362.7,428.8 L364.9,429.3 L367.0,429.7 L369.2,430.0 L371.4,430.2 L373.7,430.4 L375.9,430.5 L378.1,430.5 L380.3,430.4 L382.6,430.2 L384.8,430.0 L387.0,429.7 L389.1,429.3 L391.3,428.8 L385.2,416.4 L368.8,416.4Z M408.7,421.6 L410.6,420.4 L412.4,419.1 L414.2,417.8 L416.0,416.4 L417.6,415.0 L419.3,413.4 L420.8,411.9 L422.4,410.2 L423.8,408.6 L425.2,406.8 L426.5,405.0 L427.8,403.2 L429.0,401.3 L415.9,396.8 L404.2,408.5Z M429.0,337.9 L427.8,336.1 L426.6,334.3 L425.4,332.6 L424.0,330.9 L422.7,329.3 L421.2,327.7 L419.7,326.2 L418.2,324.7 L416.6,323.3 L414.9,322.0 L413.3,320.7 L411.5,319.4 L409.7,318.3 L407.9,317.1 L406.1,316.1 L404.2,315.1 L402.3,314.2 L400.3,313.3 L398.3,312.6 L396.3,311.8 L394.3,311.2 L392.2,310.6 L390.2,310.1 L388.1,309.7 L386.0,309.4 L383.8,309.1 L381.7,308.9 L379.6,308.8 L377.5,308.7 L375.3,308.7 L373.2,308.8 L371.1,309.0 L369.0,309.2 L366.9,309.6 L364.8,309.9 L362.7,310.4 L368.8,322.8 L371.6,323.6 L374.6,345.0 L376.0,361.6 L383.0,364.6 L397.0,354.5 L414.0,340.6 L415.9,342.4Z" fill="#0cafff" fill-rule="evenodd" stroke="#1a0f15" stroke-width="0.6" stroke-linejoin="round"/><circle cx="377.0" cy="369.6" r="60.9" fill="none" stroke="#1a0f15" stroke-width="0.5"/><path d="M350.29999999999995,370.0 a26.6,26.6 0 1,0 53.2,0 a26.6,26.6 0 1,0 -53.2,0 Z M375.09999999999997,350.2 a1.8,1.8 0 1,0 3.6,0 a1.8,1.8 0 1,0 -3.6,0 Z M382.59999999999997,353.0 a1.8,1.8 0 1,0 3.6,0 a1.8,1.8 0 1,0 -3.6,0 Z M389.8,356.0 a1.8,1.8 0 1,0 3.6,0 a1.8,1.8 0 1,0 -3.6,0 Z M367.8,387.4 a1.8,1.8 0 1,0 3.6,0 a1.8,1.8 0 1,0 -3.6,0 Z" fill="#3d3d3e" fill-rule="evenodd" stroke="#141414" stroke-width="0.6"/><circle cx="376.9" cy="370.0" r="11" fill="none" stroke="#262626" stroke-width="0.8"/><polygon points="385.2,365.2 376.9,360.4 368.6,365.2 368.6,374.8 376.9,379.6 385.2,374.8" fill="#333334" stroke="#1c1c1c" stroke-width="0.7"/><circle cx="376.9" cy="370.0" r="7.2" fill="#2f2f30" stroke="#1a1a1a" stroke-width="0.7"/><circle cx="376.9" cy="370.0" r="5" fill="#38383a" stroke="#1e1e1e" stroke-width="0.5"/><circle cx="376.9" cy="370.0" r="3.3" fill="#6a6a9a" stroke="#1e1e1e" stroke-width="0.4"/><circle cx="376.9" cy="350.2" r="1.8" fill="#64648f" stroke="#222" stroke-width="0.3"/><circle cx="384.4" cy="353.0" r="1.8" fill="#64648f" stroke="#222" stroke-width="0.3"/><circle cx="391.6" cy="356.0" r="1.8" fill="#64648f" stroke="#222" stroke-width="0.3"/><circle cx="369.6" cy="387.4" r="1.8" fill="#64648f" stroke="#222" stroke-width="0.3"/><circle cx="362.8" cy="355.6" r="1.6" fill="#10b4ff"/><circle cx="356.8" cy="370.3" r="1.6" fill="#10b4ff"/><circle cx="397.3" cy="370.0" r="1.6" fill="#10b4ff"/><circle cx="391.3" cy="384.6" r="1.6" fill="#10b4ff"/><circle cx="362.5" cy="384.6" r="1.6" fill="#10b4ff"/><circle cx="377.2" cy="390.4" r="1.6" fill="#10b4ff"/><circle cx="359.8" cy="363.0" r="5.3" fill="#4a4a4c" stroke="#f2f2f2" stroke-width="0.9"/><circle cx="359.8" cy="363.0" r="3.0" fill="#454547" stroke="#c8c8c8" stroke-width="0.6"/><path d="M357.8,363.0h4M359.8,361.0v4" stroke="#9a9a9a" stroke-width="0.5"/><circle cx="394.3" cy="377.2" r="5.3" fill="#4a4a4c" stroke="#f2f2f2" stroke-width="0.9"/><circle cx="394.3" cy="377.2" r="3.0" fill="#454547" stroke="#c8c8c8" stroke-width="0.6"/><path d="M392.3,377.2h4M394.3,375.2v4" stroke="#9a9a9a" stroke-width="0.5"/></svg><svg class="abs" style="left:520px;top:53px" width="279" height="204" viewBox="520 53 279 204"><defs><linearGradient id="bg3" gradientUnits="userSpaceOnUse" x1="0" y1="53" x2="0" y2="257"><stop offset="0" stop-color="#34336a"/><stop offset="1" stop-color="#9999ad"/></linearGradient><linearGradient id="sw3" x1="0" y1="0" x2="1" y2="0"><stop offset="0" stop-color="#0b5c8c"/><stop offset="0.2" stop-color="#1197e0"/><stop offset="0.75" stop-color="#12a2ee"/><stop offset="1" stop-color="#0c6396"/></linearGradient><clipPath id="cp3"><path d="M614.0,178.8 L616.3,180.5 L618.7,182.1 L621.2,183.7 L623.8,185.1 L626.5,186.4 L629.3,187.7 L632.2,188.8 L635.2,189.8 L638.2,190.7 L641.3,191.5 L644.4,192.2 L647.6,192.7 L650.8,193.1 L654.1,193.4 L657.3,193.6 L660.6,193.6 L663.8,193.5 L667.1,193.3 L670.3,193.0 L673.5,192.6 L676.7,192.0 L679.8,191.3 L682.8,190.5 L685.8,189.5 L688.7,188.5 L691.6,187.4 L694.3,186.1 L697.0,184.7 L699.5,183.3 L702.0,181.7 L704.3,180.0 L706.5,178.3 L708.6,176.5 L710.5,174.6 L712.3,172.6 L714.0,170.5 L715.5,168.4 L716.8,166.3 L718.0,164.0 L719.1,161.8 L720.0,159.5 L720.7,157.2 L721.2,154.8 L721.6,152.4 L721.8,150.1 L721.8,147.7 L721.7,145.3 L721.4,142.9 L720.9,140.5 L720.3,138.2 L719.4,135.9 L718.5,133.6 L717.3,131.3 L716.0,129.1 L714.6,127.0 L713.0,124.9 L711.2,122.9 L709.4,120.9 L707.3,119.0 L705.2,117.2 L702.9,115.5 L700.5,113.9 L698.0,112.3 L695.4,110.9 L692.6,109.6 L689.8,108.3 L687.0,107.2 L684.0,106.2 L681.0,105.3 L677.9,104.5 L674.7,103.8 L671.6,103.3 L668.3,102.9 L665.1,102.6 L661.9,102.4 L658.6,102.4 L655.3,102.5 L652.1,102.7 L648.9,103.0 L645.7,103.4 L642.5,104.0 L639.4,104.7 L636.4,105.5 L633.4,106.5 L630.5,107.5 L627.6,108.7 L624.9,109.9 L622.2,111.3 L619.7,112.7 L617.2,114.3 L614.9,116.0 L612.7,117.7 L610.6,119.5 L608.7,121.4 L606.9,123.4 L605.2,125.5 L603.7,127.6 L602.3,129.7 L601.1,132.0 L600.1,134.2 L599.2,136.5 L598.5,138.8 L598.0,141.2 L597.6,143.6 L597.4,145.9 L597.4,148.3 L597.5,150.7 L597.8,153.1 L598.3,155.5 L598.9,157.8 L599.7,160.1 L600.7,162.4 L601.8,164.7 L603.1,166.9 L604.6,169.0 L606.2,171.1 L607.9,173.1 L609.8,175.1 L611.9,177.0Z"/></clipPath></defs><path d="M729.6,162.5 L729.5,165.2 L729.1,167.9 L728.6,170.6 L727.9,173.2 L727.0,175.8 L725.9,178.4 L724.7,180.9 L723.2,183.4 L721.6,185.8 L719.8,188.1 L717.9,190.4 L715.8,192.6 L713.5,194.7 L711.1,196.7 L708.5,198.6 L705.8,200.5 L703.0,202.2 L700.1,203.8 L697.0,205.2 L693.9,206.6 L690.6,207.9 L687.3,209.0 L683.9,209.9 L680.4,210.8 L676.9,211.5 L673.3,212.1 L669.7,212.5 L666.0,212.8 L662.4,213.0 L658.7,213.0 L655.0,212.9 L651.3,212.6 L647.7,212.2 L644.1,211.7 L640.5,211.0 L637.0,210.2 L633.6,209.2 L630.2,208.2 L626.9,207.0 L623.7,205.6 L620.6,204.2 L617.6,202.6 L614.7,200.9 L611.9,199.1 L609.2,197.3 L606.7,195.3 L604.4,193.2 L602.2,191.0 L600.1,188.8 L598.2,186.4 L596.5,184.0 L595.0,181.6 L593.6,179.1 L592.4,176.5 L591.4,173.9 L590.6,171.3 L589.9,168.6 L589.5,166.0 L589.3,163.3 L589.2,160.6 L589.4,147.0 L589.5,144.3 L589.8,141.6 L590.4,139.0 L591.1,136.3 L592.0,133.7 L593.0,131.2 L594.3,128.6 L595.7,126.2 L597.4,123.8 L599.1,121.4 L601.1,119.2 L603.2,117.0 L605.5,114.9 L607.9,112.8 L610.5,110.9 L613.1,109.1 L616.0,107.4 L618.9,105.8 L622.0,104.3 L625.1,102.9 L628.4,101.7 L631.7,100.6 L635.1,99.6 L638.6,98.8 L642.1,98.0 L645.7,97.5 L649.3,97.0 L653.0,96.7 L656.6,96.6 L660.3,96.5 L664.0,96.7 L667.6,96.9 L671.3,97.3 L674.9,97.9 L678.5,98.5 L682.0,99.4 L685.4,100.3 L688.8,101.4 L692.1,102.6 L695.3,103.9 L698.4,105.4 L701.4,106.9 L704.3,108.6 L707.1,110.4 L709.7,112.3 L712.2,114.3 L714.6,116.4 L716.8,118.5 L718.9,120.8 L720.7,123.1 L722.5,125.5 L724.0,128.0 L725.4,130.5 L726.6,133.0 L727.6,135.6 L728.4,138.3 L729.0,140.9 L729.5,143.6 L729.7,146.3 L729.8,149.0Z" fill="url(#sw3)" stroke="#14101c" stroke-width="0.5" stroke-linejoin="round"/><ellipse cx="659.50" cy="154.43" rx="69.96" ry="51.28" transform="rotate(0.80 659.50 154.43)" fill="none" stroke="#0b0b0b" stroke-width="7.05"/><path d="M730.0,152.2 L729.8,154.9 L729.5,157.6 L729.0,160.2 L728.3,162.9 L727.4,165.5 L726.3,168.1 L725.0,170.6 L723.6,173.1 L722.0,175.5 L720.2,177.9 L718.2,180.1 L716.1,182.3 L713.8,184.4 L711.4,186.5 L708.8,188.4 L706.1,190.2 L703.3,191.9 L700.3,193.5 L697.3,195.0 L694.1,196.4 L690.9,197.6 L687.5,198.7 L684.1,199.7 L680.6,200.6 L677.1,201.3 L673.5,201.9 L669.8,202.3 L666.2,202.6 L662.5,202.8 L658.8,202.8 L655.1,202.7 L651.5,202.4 L647.8,202.0 L644.2,201.5 L640.6,200.8 L637.1,200.0 L633.6,199.0 L630.2,197.9 L626.9,196.7 L623.7,195.4 L620.6,193.9 L617.6,192.4 L614.7,190.7 L611.9,188.9 L609.2,187.0 L606.7,185.0 L604.4,182.9 L602.2,180.7 L600.1,178.5 L598.2,176.2 L596.5,173.8 L594.9,171.3 L593.6,168.8 L592.4,166.2 L591.3,163.6 L590.5,161.0 L589.9,158.3 L589.4,155.6 L589.2,152.9 L589.1,150.2 L589.2,147.0 L589.3,144.3 L589.6,141.6 L590.2,139.0 L590.9,136.3 L591.8,133.7 L592.8,131.1 L594.1,128.6 L595.6,126.1 L597.2,123.7 L599.0,121.3 L600.9,119.1 L603.1,116.9 L605.3,114.8 L607.7,112.7 L610.3,110.8 L613.0,109.0 L615.8,107.3 L618.8,105.7 L621.8,104.2 L625.0,102.8 L628.3,101.6 L631.6,100.5 L635.0,99.5 L638.5,98.6 L642.1,97.9 L645.7,97.3 L649.3,96.9 L652.9,96.6 L656.6,96.4 L660.3,96.4 L664.0,96.5 L667.7,96.8 L671.3,97.2 L674.9,97.7 L678.5,98.4 L682.0,99.2 L685.5,100.2 L688.9,101.3 L692.2,102.5 L695.4,103.8 L698.5,105.3 L701.6,106.8 L704.5,108.5 L707.2,110.3 L709.9,112.2 L712.4,114.2 L714.8,116.3 L717.0,118.5 L719.0,120.7 L720.9,123.0 L722.7,125.4 L724.2,127.9 L725.6,130.4 L726.8,133.0 L727.8,135.6 L728.6,138.2 L729.2,140.9 L729.7,143.6 L729.9,146.3 L730.0,149.0Z" fill="url(#sw3)" stroke="#14101c" stroke-width="0.5" stroke-linejoin="round"/><ellipse cx="659.59" cy="148.00" rx="70.21" ry="51.46" transform="rotate(0.80 659.59 148.00)" fill="#11a8f1" stroke="#14101c" stroke-width="0.5" stroke-linejoin="round"/><ellipse cx="659.58" cy="148.42" rx="64.69" ry="47.42" transform="rotate(0.80 659.58 148.42)" fill="#1199e3" stroke="#0c5f92" stroke-width="0.35"/><ellipse cx="659.59" cy="148.00" rx="62.24" ry="45.62" transform="rotate(0.80 659.59 148.00)" fill="#0d4f7d" stroke="#14101c" stroke-width="0.5" stroke-linejoin="round"/><g clip-path="url(#cp3)"><path d="M721.8,147.7 L721.7,145.3 L721.5,158.8 L721.6,161.2Z" fill="#083a60" stroke="#083a60" stroke-width="0.7"/><path d="M721.7,145.3 L721.4,142.9 L721.2,156.5 L721.5,158.8Z" fill="#093e65" stroke="#093e65" stroke-width="0.7"/><path d="M721.4,142.9 L720.9,140.5 L720.7,154.1 L721.2,156.5Z" fill="#0a4169" stroke="#0a4169" stroke-width="0.7"/><path d="M720.9,140.5 L720.3,138.2 L720.1,151.8 L720.7,154.1Z" fill="#0b456e" stroke="#0b456e" stroke-width="0.7"/><path d="M720.3,138.2 L719.4,135.9 L719.3,149.4 L720.1,151.8Z" fill="#0c4872" stroke="#0c4872" stroke-width="0.7"/><path d="M719.4,135.9 L718.5,133.6 L718.3,147.1 L719.3,149.4Z" fill="#0d4b76" stroke="#0d4b76" stroke-width="0.7"/><path d="M718.5,133.6 L717.3,131.3 L717.1,144.9 L718.3,147.1Z" fill="#0d4e7a" stroke="#0d4e7a" stroke-width="0.7"/><path d="M717.3,131.3 L716.0,129.1 L715.8,142.7 L717.1,144.9Z" fill="#0e517e" stroke="#0e517e" stroke-width="0.7"/><path d="M716.0,129.1 L714.6,127.0 L714.4,140.6 L715.8,142.7Z" fill="#0f5382" stroke="#0f5382" stroke-width="0.7"/><path d="M714.6,127.0 L713.0,124.9 L712.8,138.5 L714.4,140.6Z" fill="#105685" stroke="#105685" stroke-width="0.7"/><path d="M713.0,124.9 L711.2,122.9 L711.0,136.4 L712.8,138.5Z" fill="#105989" stroke="#105989" stroke-width="0.7"/><path d="M711.2,122.9 L709.4,120.9 L709.2,134.5 L711.0,136.4Z" fill="#115b8c" stroke="#115b8c" stroke-width="0.7"/><path d="M709.4,120.9 L707.3,119.0 L707.1,132.6 L709.2,134.5Z" fill="#125e8f" stroke="#125e8f" stroke-width="0.7"/><path d="M707.3,119.0 L705.2,117.2 L705.0,130.8 L707.1,132.6Z" fill="#126092" stroke="#126092" stroke-width="0.7"/><path d="M705.2,117.2 L702.9,115.5 L702.7,129.1 L705.0,130.8Z" fill="#136295" stroke="#136295" stroke-width="0.7"/><path d="M702.9,115.5 L700.5,113.9 L700.3,127.4 L702.7,129.1Z" fill="#136498" stroke="#136498" stroke-width="0.7"/><path d="M700.5,113.9 L698.0,112.3 L697.8,125.9 L700.3,127.4Z" fill="#14669b" stroke="#14669b" stroke-width="0.7"/><path d="M698.0,112.3 L695.4,110.9 L695.2,124.5 L697.8,125.9Z" fill="#14689d" stroke="#14689d" stroke-width="0.7"/><path d="M695.4,110.9 L692.6,109.6 L692.5,123.1 L695.2,124.5Z" fill="#15699f" stroke="#15699f" stroke-width="0.7"/><path d="M692.6,109.6 L689.8,108.3 L689.7,121.9 L692.5,123.1Z" fill="#156ba1" stroke="#156ba1" stroke-width="0.7"/><path d="M689.8,108.3 L687.0,107.2 L686.8,120.8 L689.7,121.9Z" fill="#156ca3" stroke="#156ca3" stroke-width="0.7"/><path d="M687.0,107.2 L684.0,106.2 L683.8,119.7 L686.8,120.8Z" fill="#166da5" stroke="#166da5" stroke-width="0.7"/><path d="M684.0,106.2 L681.0,105.3 L680.8,118.8 L683.8,119.7Z" fill="#166ea6" stroke="#166ea6" stroke-width="0.7"/><path d="M681.0,105.3 L677.9,104.5 L677.7,118.1 L680.8,118.8Z" fill="#166fa7" stroke="#166fa7" stroke-width="0.7"/><path d="M677.9,104.5 L674.7,103.8 L674.5,117.4 L677.7,118.1Z" fill="#1770a9" stroke="#1770a9" stroke-width="0.7"/><path d="M674.7,103.8 L671.6,103.3 L671.4,116.9 L674.5,117.4Z" fill="#1771a9" stroke="#1771a9" stroke-width="0.7"/><path d="M671.6,103.3 L668.3,102.9 L668.2,116.4 L671.4,116.9Z" fill="#1771aa" stroke="#1771aa" stroke-width="0.7"/><path d="M668.3,102.9 L665.1,102.6 L664.9,116.1 L668.2,116.4Z" fill="#1772ab" stroke="#1772ab" stroke-width="0.7"/><path d="M665.1,102.6 L661.9,102.4 L661.7,116.0 L664.9,116.1Z" fill="#1772ab" stroke="#1772ab" stroke-width="0.7"/><path d="M661.9,102.4 L658.6,102.4 L658.4,115.9 L661.7,116.0Z" fill="#1772ab" stroke="#1772ab" stroke-width="0.7"/><path d="M658.6,102.4 L655.3,102.5 L655.2,116.0 L658.4,115.9Z" fill="#1772ab" stroke="#1772ab" stroke-width="0.7"/><path d="M655.3,102.5 L652.1,102.7 L651.9,116.2 L655.2,116.0Z" fill="#1772ab" stroke="#1772ab" stroke-width="0.7"/><path d="M652.1,102.7 L648.9,103.0 L648.7,116.5 L651.9,116.2Z" fill="#1771aa" stroke="#1771aa" stroke-width="0.7"/><path d="M648.9,103.0 L645.7,103.4 L645.5,117.0 L648.7,116.5Z" fill="#1771a9" stroke="#1771a9" stroke-width="0.7"/><path d="M645.7,103.4 L642.5,104.0 L642.3,117.6 L645.5,117.0Z" fill="#1770a9" stroke="#1770a9" stroke-width="0.7"/><path d="M642.5,104.0 L639.4,104.7 L639.2,118.3 L642.3,117.6Z" fill="#166fa7" stroke="#166fa7" stroke-width="0.7"/><path d="M639.4,104.7 L636.4,105.5 L636.2,119.1 L639.2,118.3Z" fill="#166ea6" stroke="#166ea6" stroke-width="0.7"/><path d="M636.4,105.5 L633.4,106.5 L633.2,120.0 L636.2,119.1Z" fill="#166da5" stroke="#166da5" stroke-width="0.7"/><path d="M633.4,106.5 L630.5,107.5 L630.3,121.1 L633.2,120.0Z" fill="#156ca3" stroke="#156ca3" stroke-width="0.7"/><path d="M630.5,107.5 L627.6,108.7 L627.4,122.2 L630.3,121.1Z" fill="#156ba1" stroke="#156ba1" stroke-width="0.7"/><path d="M627.6,108.7 L624.9,109.9 L624.7,123.5 L627.4,122.2Z" fill="#15699f" stroke="#15699f" stroke-width="0.7"/><path d="M624.9,109.9 L622.2,111.3 L622.0,124.8 L624.7,123.5Z" fill="#14689d" stroke="#14689d" stroke-width="0.7"/><path d="M622.2,111.3 L619.7,112.7 L619.5,126.3 L622.0,124.8Z" fill="#14669b" stroke="#14669b" stroke-width="0.7"/><path d="M619.7,112.7 L617.2,114.3 L617.0,127.9 L619.5,126.3Z" fill="#136498" stroke="#136498" stroke-width="0.7"/><path d="M617.2,114.3 L614.9,116.0 L614.7,129.5 L617.0,127.9Z" fill="#136295" stroke="#136295" stroke-width="0.7"/><path d="M614.9,116.0 L612.7,117.7 L612.5,131.3 L614.7,129.5Z" fill="#126092" stroke="#126092" stroke-width="0.7"/><path d="M612.7,117.7 L610.6,119.5 L610.4,133.1 L612.5,131.3Z" fill="#125e8f" stroke="#125e8f" stroke-width="0.7"/><path d="M610.6,119.5 L608.7,121.4 L608.5,135.0 L610.4,133.1Z" fill="#115b8c" stroke="#115b8c" stroke-width="0.7"/><path d="M608.7,121.4 L606.9,123.4 L606.7,137.0 L608.5,135.0Z" fill="#105989" stroke="#105989" stroke-width="0.7"/><path d="M606.9,123.4 L605.2,125.5 L605.0,139.0 L606.7,137.0Z" fill="#105685" stroke="#105685" stroke-width="0.7"/><path d="M605.2,125.5 L603.7,127.6 L603.5,141.1 L605.0,139.0Z" fill="#0f5382" stroke="#0f5382" stroke-width="0.7"/><path d="M603.7,127.6 L602.3,129.7 L602.1,143.3 L603.5,141.1Z" fill="#0e517e" stroke="#0e517e" stroke-width="0.7"/><path d="M602.3,129.7 L601.1,132.0 L600.9,145.5 L602.1,143.3Z" fill="#0d4e7a" stroke="#0d4e7a" stroke-width="0.7"/><path d="M601.1,132.0 L600.1,134.2 L599.9,147.8 L600.9,145.5Z" fill="#0d4b76" stroke="#0d4b76" stroke-width="0.7"/><path d="M600.1,134.2 L599.2,136.5 L599.0,150.1 L599.9,147.8Z" fill="#0c4872" stroke="#0c4872" stroke-width="0.7"/><path d="M599.2,136.5 L598.5,138.8 L598.3,152.4 L599.0,150.1Z" fill="#0b456e" stroke="#0b456e" stroke-width="0.7"/><path d="M598.5,138.8 L598.0,141.2 L597.8,154.7 L598.3,152.4Z" fill="#0a4169" stroke="#0a4169" stroke-width="0.7"/><path d="M598.0,141.2 L597.6,143.6 L597.4,157.1 L597.8,154.7Z" fill="#093e65" stroke="#093e65" stroke-width="0.7"/><path d="M597.6,143.6 L597.4,145.9 L597.2,159.5 L597.4,157.1Z" fill="#083a60" stroke="#083a60" stroke-width="0.7"/><path d="M605.1,183.5 L606.3,185.0 L607.5,186.4 L608.8,187.8 L610.1,189.1 L611.6,190.4 L613.1,191.7 L614.6,192.9 L616.2,194.1 L617.9,195.3 L619.6,196.4 L621.4,197.4 L623.2,198.4 L625.1,199.4 L630.1,189.8 L618.6,180.6Z M719.3,174.3 L719.9,172.7 L720.4,171.0 L720.8,169.4 L721.1,167.8 L721.4,166.1 L721.5,164.5 L721.6,162.8 L721.6,161.1 L721.5,159.5 L721.4,157.8 L721.1,156.1 L720.8,154.5 L720.4,152.8 L707.5,157.0 L706.9,169.3Z M713.7,139.6 L712.5,138.1 L711.3,136.7 L710.0,135.3 L708.7,134.0 L707.2,132.7 L705.7,131.4 L704.2,130.2 L702.6,129.0 L700.9,127.8 L699.2,126.7 L697.4,125.7 L695.6,124.7 L693.7,123.7 L688.7,133.4 L700.2,142.5Z M676.2,117.7 L674.0,117.3 L671.8,116.9 L669.6,116.6 L667.3,116.4 L665.1,116.2 L662.8,116.0 L660.5,115.9 L658.3,115.9 L656.0,116.0 L653.7,116.1 L651.5,116.3 L649.2,116.5 L647.0,116.8 L652.7,126.3 L669.6,126.8Z M628.9,121.6 L627.0,122.4 L625.1,123.3 L623.2,124.2 L621.4,125.2 L619.6,126.2 L617.9,127.3 L616.2,128.4 L614.6,129.6 L613.0,130.8 L611.6,132.1 L610.1,133.4 L608.8,134.7 L607.5,136.0 L620.7,139.8 L633.0,131.5Z M599.5,148.8 L598.9,150.4 L598.4,152.1 L598.0,153.7 L597.7,155.3 L597.4,157.0 L597.3,158.7 L597.2,160.3 L597.2,162.0 L597.3,163.7 L597.4,165.3 L597.7,167.0 L598.0,168.6 L598.4,170.3 L611.3,166.1 L611.9,153.8Z M642.6,205.4 L644.7,205.8 L646.8,206.2 L648.9,206.5 L651.1,206.7 L653.3,206.9 L655.4,207.1 L657.6,207.1 L659.8,207.2 L662.0,207.2 L664.1,207.1 L666.3,206.9 L668.5,206.8 L670.6,206.5 L672.8,206.2 L674.9,205.8 L677.0,205.4 L679.1,205.0 L681.1,204.5 L683.1,203.9 L685.1,203.3 L687.1,202.6 L689.0,201.9 L690.9,201.1 L692.8,200.3 L694.6,199.4 L696.4,198.5 L698.1,197.5 L699.8,196.5 L701.4,195.5 L703.0,194.4 L704.5,193.3 L706.0,192.1 L707.4,190.9 L708.8,189.6 L710.1,188.4 L711.3,187.1 L698.1,183.3 L695.5,184.3 L678.3,174.0 L665.7,165.5 L658.4,167.4 L654.9,180.0 L651.9,196.3 L649.2,196.3Z" fill="url(#bg3)"/><path d="M630.3,179.7 L618.8,170.5 L618.6,180.6 L630.1,189.8Z" fill="#116da3" stroke="#14101c" stroke-width="0.35" stroke-linejoin="round"/><path d="M618.8,170.5 L605.3,173.5 L605.1,183.5 L618.6,180.6Z" fill="#147db9" stroke="#14101c" stroke-width="0.35" stroke-linejoin="round"/><path d="M720.5,142.8 L707.6,146.9 L707.5,157.0 L720.4,152.8Z" fill="#147bb6" stroke="#14101c" stroke-width="0.35" stroke-linejoin="round"/><path d="M707.6,146.9 L707.0,159.2 L706.9,169.3 L707.5,157.0Z" fill="#083a5f" stroke="#14101c" stroke-width="0.35" stroke-linejoin="round"/><path d="M693.9,113.6 L688.8,123.3 L688.7,133.4 L693.7,123.7Z" fill="#0d5685" stroke="#14101c" stroke-width="0.35" stroke-linejoin="round"/><path d="M633.2,121.4 L629.1,111.5 L628.9,121.6 L633.0,131.5Z" fill="#0c5280" stroke="#14101c" stroke-width="0.35" stroke-linejoin="round"/><path d="M612.1,143.7 L599.6,138.8 L599.5,148.8 L611.9,153.8Z" fill="#1479b4" stroke="#14101c" stroke-width="0.35" stroke-linejoin="round"/><path d="M711.4,177.0 L698.3,173.2 L698.1,183.3 L711.3,187.1Z" fill="#147cb8" stroke="#14101c" stroke-width="0.35" stroke-linejoin="round"/><path d="M698.3,173.2 L695.6,174.2 L695.5,184.3 L698.1,183.3Z" fill="#1479b3" stroke="#14101c" stroke-width="0.35" stroke-linejoin="round"/><path d="M695.6,174.2 L678.5,163.9 L678.3,174.0 L695.5,184.3Z" fill="#1373ab" stroke="#14101c" stroke-width="0.35" stroke-linejoin="round"/><path d="M678.5,163.9 L665.9,155.4 L665.7,165.5 L678.3,174.0Z" fill="#1271a8" stroke="#14101c" stroke-width="0.35" stroke-linejoin="round"/><path d="M665.9,155.4 L658.5,157.3 L658.4,167.4 L665.7,165.5Z" fill="#147cb8" stroke="#14101c" stroke-width="0.35" stroke-linejoin="round"/><path d="M658.5,157.3 L655.1,169.9 L654.9,180.0 L658.4,167.4Z" fill="#0b4974" stroke="#14101c" stroke-width="0.35" stroke-linejoin="round"/><path d="M655.1,169.9 L652.0,186.2 L651.9,196.3 L654.9,180.0Z" fill="#0a446d" stroke="#14101c" stroke-width="0.35" stroke-linejoin="round"/><path d="M652.0,186.2 L649.4,186.2 L649.2,196.3 L651.9,196.3Z" fill="#1580bd" stroke="#14101c" stroke-width="0.35" stroke-linejoin="round"/><path d="M649.4,186.2 L642.7,195.3 L642.6,205.4 L649.2,196.3Z" fill="#0f5e8f" stroke="#14101c" stroke-width="0.35" stroke-linejoin="round"/><path d="M686.7,155.5 L686.6,156.5 L686.5,157.6 L686.3,158.6 L686.0,159.6 L685.7,160.6 L685.3,161.6 L684.8,162.6 L684.2,163.5 L683.6,164.5 L682.9,165.4 L682.1,166.3 L681.3,167.1 L680.4,167.9 L679.5,168.7 L678.5,169.4 L677.5,170.2 L676.4,170.8 L675.2,171.4 L674.1,172.0 L672.8,172.5 L671.6,173.0 L670.3,173.4 L669.0,173.8 L667.6,174.2 L666.3,174.4 L664.9,174.7 L663.5,174.8 L662.1,174.9 L660.6,175.0 L659.2,175.0 L657.8,175.0 L656.4,174.9 L655.0,174.7 L653.6,174.5 L652.2,174.2 L650.8,173.9 L649.5,173.6 L648.2,173.1 L646.9,172.7 L645.7,172.2 L644.5,171.6 L643.3,171.0 L642.2,170.3 L641.1,169.6 L640.1,168.9 L639.1,168.1 L638.2,167.3 L637.3,166.5 L636.5,165.6 L635.8,164.7 L635.1,163.8 L634.5,162.8 L634.0,161.9 L633.6,160.9 L633.2,159.9 L632.8,158.9 L632.6,157.8 L632.4,156.8 L632.3,155.8 L632.3,154.7 L632.4,150.9 L632.4,149.8 L632.5,148.8 L632.7,147.8 L633.0,146.8 L633.4,145.7 L633.8,144.8 L634.3,143.8 L634.8,142.8 L635.5,141.9 L636.1,141.0 L636.9,140.1 L637.7,139.2 L638.6,138.4 L639.5,137.7 L640.5,136.9 L641.6,136.2 L642.7,135.5 L643.8,134.9 L645.0,134.4 L646.2,133.8 L647.5,133.3 L648.7,132.9 L650.1,132.5 L651.4,132.2 L652.8,131.9 L654.2,131.7 L655.6,131.5 L657.0,131.4 L658.4,131.4 L659.8,131.3 L661.2,131.4 L662.7,131.5 L664.1,131.6 L665.5,131.9 L666.8,132.1 L668.2,132.4 L669.5,132.8 L670.9,133.2 L672.1,133.7 L673.4,134.2 L674.6,134.8 L675.7,135.4 L676.9,136.0 L677.9,136.7 L679.0,137.4 L679.9,138.2 L680.8,139.0 L681.7,139.9 L682.5,140.7 L683.2,141.6 L683.9,142.6 L684.5,143.5 L685.0,144.5 L685.5,145.5 L685.9,146.5 L686.2,147.5 L686.4,148.5 L686.6,149.6 L686.7,150.6 L686.7,151.6Z" fill="#2b2b2c"/><path d="M613.2,182.8 L615.5,184.5 L618.0,186.2 L620.5,187.7 L623.2,189.2 L625.9,190.5 L628.8,191.8 L631.7,192.9 L634.7,194.0 L637.8,194.9 L641.0,195.7 L644.1,196.4 L647.4,196.9 L650.6,197.3 L653.9,197.6 L657.2,197.8 L660.5,197.9 L663.9,197.8 L667.2,197.6 L670.4,197.2 L673.7,196.8 L676.9,196.2 L680.0,195.5 L683.1,194.7 L686.2,193.7 L689.2,192.6 L692.0,191.5 L694.8,190.2 L697.5,188.8 L700.1,187.3 L702.6,185.7 L705.0,184.0 L707.2,182.3 L709.3,180.4 L711.3,178.5 L713.1,176.5 L714.8,174.4 L716.4,172.2 L717.7,170.0 L719.0,167.8 L720.0,165.5 L720.9,163.2 L721.6,160.8 L722.2,158.4 L722.6,156.0 L722.8,153.6 L722.8,151.1 L722.7,148.7 L722.3,146.3 L721.9,143.9 L721.2,141.5 L720.4,139.2 L719.4,136.8 L718.2,134.5 L716.9,132.3 L715.4,130.1 L713.8,128.0 L712.0,125.9 L710.1,124.0 L708.1,122.0 L705.9,120.2 L703.6,118.5 L701.1,116.8 L698.6,115.2 L695.9,113.8 L693.1,112.4 L690.3,111.2 L687.4,110.0 L684.3,109.0 L681.3,108.1 L678.1,107.3 L674.9,106.6 L671.7,106.0 L668.4,105.6 L665.1,105.3 L661.8,105.1 L658.5,105.1 L655.2,105.2 L651.9,105.4 L648.6,105.7 L645.4,106.2 L642.2,106.8 L639.0,107.5 L635.9,108.3 L632.9,109.2 L629.9,110.3 L627.0,111.5 L624.2,112.8 L621.5,114.2 L619.0,115.6 L616.5,117.2 L614.1,118.9 L611.9,120.7 L609.8,122.6 L607.8,124.5 L605.9,126.5 L604.3,128.6 L602.7,130.7 L601.3,132.9 L600.1,135.2 L599.1,137.5 L598.2,139.8 L597.5,142.2 L596.9,144.5 L596.5,147.0 L596.3,149.4 L596.3,151.8 L596.4,154.2 L596.7,156.7 L597.2,159.1 L597.9,161.4 L598.7,163.8 L599.7,166.1 L600.9,168.4 L602.2,170.6 L603.6,172.8 L605.3,175.0 L607.0,177.0 L609.0,179.0 L611.0,180.9Z M605.3,173.5 L606.4,174.9 L607.6,176.3 L608.9,177.7 L610.3,179.0 L611.7,180.4 L613.2,181.6 L614.7,182.9 L616.3,184.0 L618.0,185.2 L619.7,186.3 L621.5,187.3 L623.3,188.3 L625.2,189.3 L630.3,179.7 L618.8,170.5Z M719.5,164.2 L720.0,162.6 L720.5,161.0 L720.9,159.3 L721.3,157.7 L721.5,156.0 L721.7,154.4 L721.8,152.7 L721.8,151.0 L721.7,149.4 L721.5,147.7 L721.3,146.1 L720.9,144.4 L720.5,142.8 L707.6,146.9 L707.0,159.2Z M713.8,129.5 L712.7,128.0 L711.4,126.6 L710.2,125.3 L708.8,123.9 L707.4,122.6 L705.9,121.3 L704.3,120.1 L702.7,118.9 L701.1,117.8 L699.3,116.7 L697.6,115.6 L695.8,114.6 L693.9,113.6 L688.8,123.3 L700.3,132.4Z M676.4,107.7 L674.2,107.2 L672.0,106.8 L669.7,106.5 L667.5,106.3 L665.2,106.1 L662.9,105.9 L660.7,105.9 L658.4,105.9 L656.1,105.9 L653.9,106.0 L651.6,106.2 L649.4,106.4 L647.1,106.7 L652.9,116.2 L669.7,116.7Z M629.1,111.5 L627.1,112.3 L625.2,113.2 L623.3,114.1 L621.5,115.1 L619.7,116.2 L618.0,117.2 L616.3,118.4 L614.7,119.5 L613.2,120.7 L611.7,122.0 L610.3,123.3 L608.9,124.6 L607.6,126.0 L620.8,129.8 L633.2,121.4Z M599.6,138.8 L599.0,140.4 L598.6,142.0 L598.1,143.6 L597.8,145.3 L597.6,146.9 L597.4,148.6 L597.3,150.2 L597.3,151.9 L597.4,153.6 L597.6,155.2 L597.8,156.9 L598.1,158.5 L598.6,160.2 L611.5,156.1 L612.1,143.7Z M642.7,195.3 L644.8,195.7 L646.9,196.1 L649.1,196.4 L651.2,196.6 L653.4,196.8 L655.6,197.0 L657.8,197.1 L659.9,197.1 L662.1,197.1 L664.3,197.0 L666.5,196.9 L668.6,196.7 L670.8,196.4 L672.9,196.1 L675.0,195.8 L677.1,195.4 L679.2,194.9 L681.2,194.4 L683.3,193.8 L685.3,193.2 L687.2,192.5 L689.2,191.8 L691.1,191.0 L692.9,190.2 L694.7,189.3 L696.5,188.4 L698.3,187.5 L699.9,186.4 L701.6,185.4 L703.1,184.3 L704.7,183.2 L706.1,182.0 L707.6,180.8 L708.9,179.6 L710.2,178.3 L711.4,177.0 L698.3,173.2 L695.6,174.2 L678.5,163.9 L665.9,155.4 L658.5,157.3 L655.1,169.9 L652.0,186.2 L649.4,186.2Z" fill="#1094dc" fill-rule="evenodd" stroke="#14101c" stroke-width="0.5" stroke-linejoin="round"/></g><ellipse cx="659.59" cy="148.00" rx="62.24" ry="45.62" transform="rotate(0.80 659.59 148.00)" fill="none" stroke="#14101c" stroke-width="0.5" stroke-linejoin="round"/><ellipse cx="659.54" cy="151.27" rx="27.19" ry="19.93" transform="rotate(0.80 659.54 151.27)" fill="#3a3a3b" stroke="#151515" stroke-width="0.6"/><ellipse cx="659.54" cy="151.27" rx="11.75" ry="8.61" transform="rotate(0.80 659.54 151.27)" fill="#303031" stroke="#1b1b1b" stroke-width="0.7"/><ellipse cx="659.56" cy="150.23" rx="9.20" ry="6.74" transform="rotate(0.80 659.56 150.23)" fill="#353536" stroke="#1b1b1b" stroke-width="0.7"/><ellipse cx="659.56" cy="150.23" rx="6.13" ry="4.49" transform="rotate(0.80 659.56 150.23)" fill="#2c2c2d" stroke="#1b1b1b" stroke-width="0.6"/><ellipse cx="659.55" cy="150.92" rx="3.47" ry="2.55" transform="rotate(0.80 659.55 150.92)" fill="#3a3a3c" stroke="#1b1b1b" stroke-width="0.5"/><ellipse cx="644.9" cy="161.2" rx="1.8" ry="1.4" fill="#242425" stroke="#181818" stroke-width="0.4"/><ellipse cx="658.8" cy="165.9" rx="1.8" ry="1.4" fill="#242425" stroke="#181818" stroke-width="0.4"/><ellipse cx="666.5" cy="165.1" rx="1.8" ry="1.4" fill="#242425" stroke="#181818" stroke-width="0.4"/><ellipse cx="673.2" cy="162.1" rx="1.8" ry="1.4" fill="#242425" stroke="#181818" stroke-width="0.4"/><ellipse cx="679.6" cy="151.9" rx="1.8" ry="1.4" fill="#242425" stroke="#181818" stroke-width="0.4"/><ellipse cx="674.2" cy="141.4" rx="1.8" ry="1.4" fill="#242425" stroke="#181818" stroke-width="0.4"/><ellipse cx="660.3" cy="136.6" rx="1.8" ry="1.4" fill="#242425" stroke="#181818" stroke-width="0.4"/><ellipse cx="652.6" cy="137.5" rx="1.8" ry="1.4" fill="#242425" stroke="#181818" stroke-width="0.4"/><ellipse cx="645.9" cy="140.4" rx="1.8" ry="1.4" fill="#242425" stroke="#181818" stroke-width="0.4"/><ellipse cx="639.5" cy="150.6" rx="1.8" ry="1.4" fill="#242425" stroke="#181818" stroke-width="0.4"/><ellipse cx="677.4" cy="145.7" rx="5.2" ry="4.0" fill="#5a5a5c" stroke="#1c1c1c" stroke-width="0.7"/><ellipse cx="677.4" cy="145.2" rx="4" ry="3.0" fill="#858587" stroke="#c4c4c4" stroke-width="0.5"/><path d="M674.9,146.0L679.9,144.4M676.4,143.5L678.4,146.9" stroke="#2e2e2e" stroke-width="0.9"/><ellipse cx="641.7" cy="155.2" rx="5.2" ry="4.0" fill="#5a5a5c" stroke="#1c1c1c" stroke-width="0.7"/><ellipse cx="641.7" cy="154.7" rx="4" ry="3.0" fill="#858587" stroke="#c4c4c4" stroke-width="0.5"/><path d="M639.2,155.5L644.2,153.9M640.7,153.0L642.7,156.4" stroke="#2e2e2e" stroke-width="0.9"/></svg><svg class="abs" style="left:520px;top:268.7px" width="279" height="203.5" viewBox="520 268.7 279 203.5"><defs><linearGradient id="bg1" gradientUnits="userSpaceOnUse" x1="0" y1="268.7" x2="0" y2="472.2"><stop offset="0" stop-color="#34336a"/><stop offset="1" stop-color="#9999ad"/></linearGradient><linearGradient id="sw1" gradientUnits="userSpaceOnUse" x1="590" y1="330" x2="720" y2="410"><stop offset="0" stop-color="#0a5a8a"/><stop offset="0.3" stop-color="#1090d6"/><stop offset="0.7" stop-color="#119ae4"/><stop offset="1" stop-color="#0c6396"/></linearGradient><clipPath id="cp1"><path d="M713.5,398.3 L713.0,400.8 L712.2,403.2 L711.4,405.5 L710.3,407.7 L709.2,409.8 L707.8,411.9 L706.3,413.8 L704.7,415.7 L703.0,417.4 L701.1,419.1 L699.1,420.6 L697.0,422.0 L694.7,423.3 L692.3,424.5 L689.9,425.5 L687.3,426.4 L684.7,427.2 L682.0,427.8 L679.2,428.3 L676.3,428.6 L673.4,428.9 L670.4,428.9 L667.4,428.8 L664.3,428.6 L661.2,428.3 L658.1,427.8 L655.0,427.2 L651.9,426.4 L648.8,425.5 L645.7,424.4 L642.7,423.3 L639.7,422.0 L636.7,420.6 L633.8,419.0 L630.9,417.4 L628.1,415.6 L625.3,413.8 L622.7,411.8 L620.1,409.8 L617.6,407.6 L615.3,405.4 L613.0,403.1 L610.9,400.7 L608.8,398.3 L606.9,395.8 L605.2,393.2 L603.5,390.6 L602.1,388.0 L600.7,385.4 L599.5,382.7 L598.5,380.0 L597.6,377.3 L596.8,374.6 L596.3,371.9 L595.8,369.2 L595.6,366.6 L595.5,363.9 L595.6,361.4 L595.8,358.8 L596.2,356.3 L596.8,353.9 L597.5,351.5 L598.4,349.2 L599.4,347.0 L600.6,344.8 L601.9,342.8 L603.4,340.8 L605.0,339.0 L606.7,337.2 L608.6,335.6 L610.6,334.0 L612.8,332.6 L615.0,331.3 L617.4,330.2 L619.8,329.2 L622.4,328.3 L625.0,327.5 L627.8,326.9 L630.6,326.4 L633.4,326.0 L636.4,325.8 L639.3,325.7 L642.3,325.8 L645.4,326.0 L648.5,326.4 L651.6,326.9 L654.7,327.5 L657.8,328.3 L660.9,329.2 L664.0,330.2 L667.0,331.4 L670.1,332.7 L673.0,334.1 L676.0,335.6 L678.8,337.3 L681.6,339.0 L684.4,340.9 L687.0,342.8 L689.6,344.9 L692.1,347.0 L694.4,349.3 L696.7,351.6 L698.9,353.9 L700.9,356.4 L702.8,358.9 L704.5,361.4 L706.2,364.0 L707.7,366.6 L709.0,369.3 L710.2,372.0 L711.3,374.7 L712.1,377.4 L712.9,380.1 L713.5,382.8 L713.9,385.4 L714.1,388.1 L714.2,390.7 L714.1,393.3 L713.9,395.9Z"/></clipPath><clipPath id="cpf1"><path d="M727.6,389.5 L726.9,392.2 L726.1,394.9 L725.2,397.5 L724.0,400.0 L722.7,402.4 L721.2,404.7 L719.5,406.9 L717.7,409.0 L715.7,411.0 L713.6,412.8 L711.4,414.5 L709.0,416.1 L706.5,417.5 L703.8,418.8 L701.0,420.0 L698.2,421.0 L695.2,421.9 L692.1,422.6 L689.0,423.1 L685.8,423.5 L682.5,423.8 L679.1,423.8 L675.8,423.8 L672.3,423.5 L668.9,423.1 L665.4,422.6 L661.9,421.9 L658.4,421.0 L654.9,420.0 L651.5,418.8 L648.0,417.5 L644.6,416.1 L641.3,414.5 L638.0,412.8 L634.8,410.9 L631.6,408.9 L628.5,406.8 L625.6,404.6 L622.7,402.3 L619.9,399.9 L617.2,397.4 L614.7,394.8 L612.3,392.2 L610.0,389.4 L607.9,386.6 L605.9,383.8 L604.1,380.9 L602.4,377.9 L600.9,374.9 L599.5,371.9 L598.4,368.9 L597.4,365.9 L596.5,362.8 L595.9,359.8 L595.4,356.8 L595.1,353.8 L595.0,350.9 L595.1,348.0 L595.4,345.1 L595.8,342.3 L596.5,339.6 L597.3,336.9 L598.2,334.3 L599.4,331.8 L600.7,329.4 L602.2,327.1 L603.9,324.9 L605.7,322.8 L607.7,320.8 L609.8,319.0 L612.0,317.3 L614.4,315.7 L616.9,314.3 L619.6,313.0 L622.4,311.8 L625.2,310.8 L628.2,309.9 L631.3,309.2 L634.4,308.7 L637.6,308.3 L640.9,308.0 L644.3,308.0 L647.6,308.0 L651.1,308.3 L654.5,308.7 L658.0,309.2 L661.5,309.9 L665.0,310.8 L668.5,311.8 L671.9,313.0 L675.4,314.3 L678.8,315.7 L682.1,317.3 L685.4,319.0 L688.6,320.9 L691.8,322.9 L694.9,325.0 L697.8,327.2 L700.7,329.5 L703.5,331.9 L706.2,334.4 L708.7,337.0 L711.1,339.6 L713.4,342.4 L715.5,345.2 L717.5,348.0 L719.3,350.9 L721.0,353.9 L722.5,356.9 L723.9,359.9 L725.0,362.9 L726.0,365.9 L726.9,369.0 L727.5,372.0 L728.0,375.0 L728.3,378.0 L728.4,380.9 L728.3,383.8 L728.0,386.7Z"/></clipPath></defs><path d="M722.9,402.6 L724.3,400.1 L725.4,397.6 L726.4,395.0 L727.2,392.4 L727.9,389.6 L728.3,386.8 L728.6,383.9 L728.7,381.0 L728.6,378.0 L728.3,375.0 L727.8,372.0 L727.2,369.0 L726.3,365.9 L725.3,362.9 L724.1,359.9 L722.8,356.8 L721.3,353.8 L719.6,350.9 L717.7,348.0 L715.8,345.1 L713.6,342.3 L711.3,339.5 L708.9,336.8 L706.4,334.2 L703.7,331.7 L700.9,329.3 L698.0,327.0 L695.0,324.8 L691.9,322.7 L688.8,320.7 L685.5,318.8 L682.2,317.1 L678.8,315.5 L675.4,314.1 L672.0,312.8 L668.5,311.6 L665.0,310.6 L661.5,309.7 L658.0,309.0 L654.5,308.4 L651.0,308.0 L647.6,307.8 L644.2,307.7 L640.8,307.8 L637.5,308.0 L634.3,308.4 L631.1,309.0 L628.1,309.7 L625.1,310.5 L622.2,311.6 L619.4,312.7 L616.8,314.0 L614.2,315.5 L611.8,317.1 L609.5,318.8 L607.4,320.6 L605.4,322.6 L603.6,324.7 L602.0,326.9 L600.5,329.2 L594.9,338.5 L593.6,340.9 L592.4,343.4 L591.4,346.0 L590.6,348.7 L590.0,351.5 L589.5,354.3 L589.3,357.1 L589.2,360.1 L589.3,363.0 L589.6,366.0 L590.1,369.0 L590.7,372.1 L591.5,375.1 L592.5,378.2 L593.7,381.2 L595.1,384.2 L596.6,387.2 L598.3,390.2 L600.1,393.1 L602.1,396.0 L604.2,398.8 L606.5,401.5 L609.0,404.2 L611.5,406.8 L614.2,409.3 L617.0,411.8 L619.9,414.1 L622.8,416.3 L625.9,418.4 L629.1,420.4 L632.3,422.2 L635.7,423.9 L639.0,425.5 L642.4,427.0 L645.9,428.3 L649.4,429.5 L652.8,430.5 L656.4,431.4 L659.9,432.1 L663.4,432.6 L666.8,433.0 L670.3,433.3 L673.7,433.4 L677.0,433.3 L680.3,433.0 L683.6,432.7 L686.7,432.1 L689.8,431.4 L692.8,430.5 L695.7,429.5 L698.4,428.3 L701.1,427.0 L703.6,425.6 L706.0,424.0 L708.3,422.3 L710.4,420.4 L712.4,418.4 L714.2,416.3 L715.9,414.1 L717.4,411.8Z" fill="url(#sw1)" stroke="#14101c" stroke-width="0.5" stroke-linejoin="round"/><ellipse cx="659.83" cy="369.03" rx="71.38" ry="52.68" transform="rotate(30.90 659.83 369.03)" fill="none" stroke="#0b0b0b" stroke-width="6.65"/><path d="M723.1,402.7 L724.5,400.2 L725.6,397.7 L726.6,395.1 L727.4,392.4 L728.1,389.7 L728.5,386.9 L728.8,384.0 L728.9,381.0 L728.7,378.1 L728.5,375.1 L728.0,372.0 L727.3,369.0 L726.5,365.9 L725.5,362.9 L724.3,359.8 L723.0,356.8 L721.4,353.8 L719.8,350.8 L717.9,347.9 L715.9,345.0 L713.8,342.2 L711.5,339.4 L709.0,336.8 L706.5,334.1 L703.8,331.6 L701.0,329.2 L698.1,326.9 L695.1,324.7 L692.0,322.6 L688.8,320.6 L685.6,318.7 L682.3,317.0 L678.9,315.4 L675.5,313.9 L672.0,312.6 L668.5,311.4 L665.0,310.4 L661.5,309.5 L658.0,308.8 L654.5,308.3 L651.0,307.9 L647.5,307.6 L644.1,307.5 L640.8,307.6 L637.4,307.8 L634.2,308.2 L631.0,308.8 L628.0,309.5 L625.0,310.4 L622.1,311.4 L619.3,312.6 L616.6,313.9 L614.1,315.3 L611.7,316.9 L609.4,318.7 L607.3,320.5 L605.3,322.5 L603.4,324.6 L601.8,326.8 L600.3,329.1 L599.2,330.9 L597.9,333.3 L596.7,335.8 L595.7,338.4 L594.9,341.1 L594.3,343.9 L593.9,346.7 L593.6,349.6 L593.5,352.5 L593.6,355.5 L593.9,358.5 L594.4,361.5 L595.0,364.5 L595.8,367.6 L596.9,370.7 L598.0,373.7 L599.4,376.7 L600.9,379.7 L602.6,382.7 L604.4,385.6 L606.4,388.5 L608.6,391.3 L610.9,394.1 L613.3,396.8 L615.9,399.4 L618.6,401.9 L621.3,404.3 L624.2,406.7 L627.3,408.9 L630.3,411.0 L633.5,413.0 L636.8,414.8 L640.1,416.6 L643.5,418.2 L646.9,419.6 L650.3,420.9 L653.8,422.1 L657.3,423.1 L660.9,424.0 L664.4,424.7 L667.9,425.3 L671.4,425.7 L674.8,425.9 L678.2,426.0 L681.6,425.9 L684.9,425.7 L688.2,425.3 L691.3,424.7 L694.4,424.0 L697.4,423.2 L700.3,422.1 L703.1,421.0 L705.7,419.7 L708.3,418.2 L710.7,416.6 L713.0,414.9 L715.1,413.0 L717.1,411.0 L718.9,408.9 L720.6,406.7 L722.1,404.4Z" fill="url(#sw1)" stroke="#14101c" stroke-width="0.5" stroke-linejoin="round"/><ellipse cx="661.70" cy="365.90" rx="71.38" ry="52.68" transform="rotate(30.90 661.70 365.90)" fill="#0a436b" stroke="#14101c" stroke-width="0.5" stroke-linejoin="round"/><path d="M713.5,398.3 L713.0,400.8 L719.8,389.4 L720.4,386.9Z" fill="#0a3d62" stroke="#0a3d62" stroke-width="0.7"/><path d="M713.0,400.8 L712.2,403.2 L719.1,391.7 L719.8,389.4Z" fill="#09395d" stroke="#09395d" stroke-width="0.7"/><path d="M712.2,403.2 L711.4,405.5 L718.2,394.0 L719.1,391.7Z" fill="#083658" stroke="#083658" stroke-width="0.7"/><path d="M711.4,405.5 L710.3,407.7 L717.2,396.3 L718.2,394.0Z" fill="#073253" stroke="#073253" stroke-width="0.7"/><path d="M710.3,407.7 L709.2,409.8 L716.0,398.4 L717.2,396.3Z" fill="#062e4d" stroke="#062e4d" stroke-width="0.7"/><path d="M600.6,344.8 L601.9,342.8 L608.7,331.4 L607.4,333.4Z" fill="#062e4d" stroke="#062e4d" stroke-width="0.7"/><path d="M601.9,342.8 L603.4,340.8 L610.2,329.4 L608.7,331.4Z" fill="#073253" stroke="#073253" stroke-width="0.7"/><path d="M603.4,340.8 L605.0,339.0 L611.8,327.5 L610.2,329.4Z" fill="#083658" stroke="#083658" stroke-width="0.7"/><path d="M605.0,339.0 L606.7,337.2 L613.6,325.8 L611.8,327.5Z" fill="#09395d" stroke="#09395d" stroke-width="0.7"/><path d="M606.7,337.2 L608.6,335.6 L615.5,324.1 L613.6,325.8Z" fill="#0a3d62" stroke="#0a3d62" stroke-width="0.7"/><path d="M608.6,335.6 L610.6,334.0 L617.5,322.6 L615.5,324.1Z" fill="#0a4066" stroke="#0a4066" stroke-width="0.7"/><path d="M610.6,334.0 L612.8,332.6 L619.6,321.2 L617.5,322.6Z" fill="#0b436b" stroke="#0b436b" stroke-width="0.7"/><path d="M612.8,332.6 L615.0,331.3 L621.9,319.9 L619.6,321.2Z" fill="#0b466f" stroke="#0b466f" stroke-width="0.7"/><path d="M615.0,331.3 L617.4,330.2 L624.2,318.8 L621.9,319.9Z" fill="#0c4973" stroke="#0c4973" stroke-width="0.7"/><path d="M617.4,330.2 L619.8,329.2 L626.7,317.7 L624.2,318.8Z" fill="#0d4c77" stroke="#0d4c77" stroke-width="0.7"/><path d="M619.8,329.2 L622.4,328.3 L629.2,316.8 L626.7,317.7Z" fill="#0d4f7b" stroke="#0d4f7b" stroke-width="0.7"/><path d="M622.4,328.3 L625.0,327.5 L631.9,316.1 L629.2,316.8Z" fill="#0e517f" stroke="#0e517f" stroke-width="0.7"/><path d="M625.0,327.5 L627.8,326.9 L634.6,315.4 L631.9,316.1Z" fill="#0e5482" stroke="#0e5482" stroke-width="0.7"/><path d="M627.8,326.9 L630.6,326.4 L637.4,314.9 L634.6,315.4Z" fill="#0f5686" stroke="#0f5686" stroke-width="0.7"/><path d="M630.6,326.4 L633.4,326.0 L640.3,314.6 L637.4,314.9Z" fill="#0f5889" stroke="#0f5889" stroke-width="0.7"/><path d="M633.4,326.0 L636.4,325.8 L643.2,314.4 L640.3,314.6Z" fill="#105a8c" stroke="#105a8c" stroke-width="0.7"/><path d="M636.4,325.8 L639.3,325.7 L646.2,314.3 L643.2,314.4Z" fill="#105c8f" stroke="#105c8f" stroke-width="0.7"/><path d="M639.3,325.7 L642.3,325.8 L649.2,314.4 L646.2,314.3Z" fill="#115e91" stroke="#115e91" stroke-width="0.7"/><path d="M642.3,325.8 L645.4,326.0 L652.2,314.6 L649.2,314.4Z" fill="#116094" stroke="#116094" stroke-width="0.7"/><path d="M645.4,326.0 L648.5,326.4 L655.3,315.0 L652.2,314.6Z" fill="#116296" stroke="#116296" stroke-width="0.7"/><path d="M648.5,326.4 L651.6,326.9 L658.4,315.4 L655.3,315.0Z" fill="#126398" stroke="#126398" stroke-width="0.7"/><path d="M651.6,326.9 L654.7,327.5 L661.5,316.1 L658.4,315.4Z" fill="#12659a" stroke="#12659a" stroke-width="0.7"/><path d="M654.7,327.5 L657.8,328.3 L664.6,316.8 L661.5,316.1Z" fill="#12669c" stroke="#12669c" stroke-width="0.7"/><path d="M657.8,328.3 L660.9,329.2 L667.7,317.8 L664.6,316.8Z" fill="#12679d" stroke="#12679d" stroke-width="0.7"/><path d="M660.9,329.2 L664.0,330.2 L670.8,318.8 L667.7,317.8Z" fill="#13689f" stroke="#13689f" stroke-width="0.7"/><path d="M664.0,330.2 L667.0,331.4 L673.9,320.0 L670.8,318.8Z" fill="#1368a0" stroke="#1368a0" stroke-width="0.7"/><path d="M667.0,331.4 L670.1,332.7 L676.9,321.2 L673.9,320.0Z" fill="#1369a1" stroke="#1369a1" stroke-width="0.7"/><path d="M670.1,332.7 L673.0,334.1 L679.9,322.7 L676.9,321.2Z" fill="#136aa1" stroke="#136aa1" stroke-width="0.7"/><path d="M673.0,334.1 L676.0,335.6 L682.8,324.2 L679.9,322.7Z" fill="#136aa2" stroke="#136aa2" stroke-width="0.7"/><path d="M676.0,335.6 L678.8,337.3 L685.7,325.8 L682.8,324.2Z" fill="#136aa2" stroke="#136aa2" stroke-width="0.7"/><path d="M678.8,337.3 L681.6,339.0 L688.5,327.6 L685.7,325.8Z" fill="#136aa2" stroke="#136aa2" stroke-width="0.7"/><path d="M681.6,339.0 L684.4,340.9 L691.2,329.4 L688.5,327.6Z" fill="#136aa2" stroke="#136aa2" stroke-width="0.7"/><path d="M684.4,340.9 L687.0,342.8 L693.9,331.4 L691.2,329.4Z" fill="#136aa1" stroke="#136aa1" stroke-width="0.7"/><path d="M687.0,342.8 L689.6,344.9 L696.4,333.5 L693.9,331.4Z" fill="#1369a1" stroke="#1369a1" stroke-width="0.7"/><path d="M689.6,344.9 L692.1,347.0 L698.9,335.6 L696.4,333.5Z" fill="#1368a0" stroke="#1368a0" stroke-width="0.7"/><path d="M692.1,347.0 L694.4,349.3 L701.3,337.8 L698.9,335.6Z" fill="#13689f" stroke="#13689f" stroke-width="0.7"/><path d="M694.4,349.3 L696.7,351.6 L703.5,340.1 L701.3,337.8Z" fill="#12679d" stroke="#12679d" stroke-width="0.7"/><path d="M696.7,351.6 L698.9,353.9 L705.7,342.5 L703.5,340.1Z" fill="#12669c" stroke="#12669c" stroke-width="0.7"/><path d="M698.9,353.9 L700.9,356.4 L707.7,345.0 L705.7,342.5Z" fill="#12659a" stroke="#12659a" stroke-width="0.7"/><path d="M700.9,356.4 L702.8,358.9 L709.6,347.4 L707.7,345.0Z" fill="#126398" stroke="#126398" stroke-width="0.7"/><path d="M702.8,358.9 L704.5,361.4 L711.4,350.0 L709.6,347.4Z" fill="#116296" stroke="#116296" stroke-width="0.7"/><path d="M704.5,361.4 L706.2,364.0 L713.0,352.6 L711.4,350.0Z" fill="#116094" stroke="#116094" stroke-width="0.7"/><path d="M706.2,364.0 L707.7,366.6 L714.5,355.2 L713.0,352.6Z" fill="#115e91" stroke="#115e91" stroke-width="0.7"/><path d="M707.7,366.6 L709.0,369.3 L715.9,357.9 L714.5,355.2Z" fill="#105c8f" stroke="#105c8f" stroke-width="0.7"/><path d="M709.0,369.3 L710.2,372.0 L717.0,360.5 L715.9,357.9Z" fill="#105a8c" stroke="#105a8c" stroke-width="0.7"/><path d="M710.2,372.0 L711.3,374.7 L718.1,363.2 L717.0,360.5Z" fill="#0f5889" stroke="#0f5889" stroke-width="0.7"/><path d="M711.3,374.7 L712.1,377.4 L719.0,365.9 L718.1,363.2Z" fill="#0f5686" stroke="#0f5686" stroke-width="0.7"/><path d="M712.1,377.4 L712.9,380.1 L719.7,368.6 L719.0,365.9Z" fill="#0e5482" stroke="#0e5482" stroke-width="0.7"/><path d="M712.9,380.1 L713.5,382.8 L720.3,371.3 L719.7,368.6Z" fill="#0e517f" stroke="#0e517f" stroke-width="0.7"/><path d="M713.5,382.8 L713.9,385.4 L720.7,374.0 L720.3,371.3Z" fill="#0d4f7b" stroke="#0d4f7b" stroke-width="0.7"/><path d="M713.9,385.4 L714.1,388.1 L721.0,376.7 L720.7,374.0Z" fill="#0d4c77" stroke="#0d4c77" stroke-width="0.7"/><path d="M714.1,388.1 L714.2,390.7 L721.1,379.3 L721.0,376.7Z" fill="#0c4973" stroke="#0c4973" stroke-width="0.7"/><path d="M714.2,390.7 L714.1,393.3 L721.0,381.9 L721.1,379.3Z" fill="#0b466f" stroke="#0b466f" stroke-width="0.7"/><path d="M714.1,393.3 L713.9,395.9 L720.7,384.4 L721.0,381.9Z" fill="#0b436b" stroke="#0b436b" stroke-width="0.7"/><path d="M713.9,395.9 L713.5,398.3 L720.4,386.9 L720.7,384.4Z" fill="#0a4066" stroke="#0a4066" stroke-width="0.7"/><g clip-path="url(#cpf1)"><g clip-path="url(#cp1)"><path d="M715.6,384.0 L715.8,385.8 L715.8,387.6 L715.8,389.5 L715.7,391.3 L715.5,393.0 L715.3,394.8 L715.0,396.5 L714.5,398.2 L714.1,399.8 L713.5,401.5 L712.8,403.1 L712.1,404.6 L711.3,406.1 L700.3,397.1 L702.8,384.4Z M618.1,403.9 L616.5,402.3 L614.9,400.7 L613.4,399.1 L612.0,397.4 L610.6,395.7 L609.2,394.0 L607.9,392.2 L606.7,390.4 L605.6,388.6 L604.5,386.8 L603.5,384.9 L602.5,383.1 L601.7,381.2 L614.9,382.3 L624.4,395.3Z M597.3,365.3 L597.2,363.4 L597.1,361.6 L597.1,359.8 L597.2,358.0 L597.4,356.2 L597.7,354.5 L598.0,352.8 L598.4,351.1 L598.9,349.4 L599.5,347.8 L600.1,346.2 L600.8,344.6 L601.6,343.1 L612.7,352.1 L610.2,364.9Z M611.2,332.1 L612.6,331.1 L614.1,330.1 L615.6,329.2 L617.2,328.3 L618.9,327.5 L620.6,326.8 L622.3,326.1 L624.1,325.5 L626.0,325.0 L627.8,324.5 L629.8,324.1 L631.7,323.7 L633.7,323.5 L636.1,335.1 L623.1,340.1Z M651.5,323.9 L653.7,324.3 L655.9,324.7 L658.0,325.2 L660.2,325.8 L662.4,326.4 L664.5,327.1 L666.7,327.9 L668.8,328.7 L670.9,329.6 L673.0,330.6 L675.1,331.6 L677.1,332.6 L679.1,333.8 L671.4,341.3 L655.5,335.6Z M694.8,345.4 L696.4,346.9 L698.0,348.5 L699.5,350.2 L701.0,351.9 L702.4,353.6 L703.7,355.3 L705.0,357.1 L706.2,358.8 L707.4,360.6 L708.5,362.5 L709.5,364.3 L710.4,366.2 L711.3,368.0 L698.0,367.0 L688.5,353.9Z M701.8,417.1 L700.4,418.1 L699.0,419.1 L697.5,419.9 L696.0,420.8 L694.4,421.6 L692.8,422.3 L691.1,422.9 L689.4,423.5 L687.7,424.1 L685.9,424.6 L684.1,425.0 L682.2,425.3 L680.3,425.6 L678.4,425.9 L676.5,426.1 L674.5,426.2 L672.5,426.2 L670.5,426.2 L668.5,426.1 L666.4,426.0 L664.4,425.8 L662.3,425.5 L660.2,425.2 L658.2,424.8 L656.1,424.3 L654.0,423.8 L651.9,423.2 L649.9,422.6 L647.8,421.9 L645.8,421.1 L643.7,420.3 L641.7,419.5 L639.7,418.6 L637.7,417.6 L635.8,416.6 L633.8,415.5 L641.5,408.0 L644.4,408.3 L653.3,383.3 L652.1,382.7 L651.0,382.0 L650.0,381.3 L649.0,380.4 L648.1,379.5 L647.3,378.6 L646.6,377.6 L646.0,376.5 L645.5,375.5 L645.1,374.4 L644.9,373.3 L644.8,372.3 L644.8,371.3 L645.0,370.3 L645.2,369.3 L645.6,368.5 L646.2,367.6 L646.8,366.9 L647.5,366.3 L648.4,365.7 L649.3,365.2 L650.3,364.9 L651.4,364.6 L652.5,364.5 L653.7,364.5 L654.9,364.5 L656.1,364.7 L657.4,365.0 L658.6,365.5 L659.8,366.0 L660.9,366.6 L662.1,367.3 L663.1,368.0 L664.1,368.9 L665.0,369.8 L665.8,370.8 L666.5,371.8 L667.0,372.8 L667.5,373.9 L667.9,374.9 L668.1,376.0 L668.2,377.1 L668.1,378.1 L668.0,379.1 L667.7,380.0 L667.3,380.9 L666.7,381.7 L666.1,382.4 L665.3,383.1 L664.5,383.6 L687.8,409.8 L689.9,409.1Z" fill="url(#bg1)"/></g></g><path d="M682.9,384.3 L683.4,383.4 L683.9,382.4 L684.2,381.4 L684.6,380.4 L684.8,379.3 L685.0,378.2 L685.1,377.1 L685.1,376.0 L685.1,374.8 L685.0,373.7 L684.8,372.5 L684.5,371.3 L684.2,370.1 L683.8,368.9 L683.4,367.8 L682.8,366.6 L682.2,365.4 L681.6,364.3 L680.9,363.2 L680.1,362.1 L679.3,361.0 L678.4,359.9 L677.5,358.9 L676.5,357.9 L675.4,356.9 L674.4,355.9 L673.2,355.0 L672.1,354.2 L670.9,353.4 L669.7,352.6 L668.4,351.9 L667.1,351.2 L665.8,350.6 L664.5,350.0 L663.2,349.5 L661.8,349.1 L660.5,348.7 L659.1,348.4 L657.7,348.1 L656.4,347.9 L655.0,347.7 L653.7,347.6 L652.4,347.6 L651.1,347.6 L649.8,347.7 L648.6,347.9 L647.3,348.1 L646.2,348.3 L645.0,348.7 L643.9,349.1 L642.8,349.5 L641.8,350.0 L640.8,350.6 L639.9,351.2 L639.0,351.9 L638.2,352.6 L637.4,353.4 L636.7,354.2 L636.0,355.0 L635.5,355.9 L632.8,360.4 L632.2,361.4 L631.8,362.3 L631.4,363.3 L631.1,364.4 L630.9,365.4 L630.7,366.5 L630.6,367.6 L630.6,368.8 L630.6,369.9 L630.7,371.1 L630.9,372.3 L631.1,373.4 L631.5,374.6 L631.8,375.8 L632.3,377.0 L632.8,378.1 L633.4,379.3 L634.1,380.4 L634.8,381.6 L635.6,382.7 L636.4,383.8 L637.3,384.8 L638.2,385.9 L639.2,386.9 L640.2,387.9 L641.3,388.8 L642.4,389.7 L643.6,390.5 L644.8,391.4 L646.0,392.1 L647.3,392.8 L648.5,393.5 L649.8,394.1 L651.2,394.7 L652.5,395.2 L653.8,395.7 L655.2,396.0 L656.6,396.4 L657.9,396.7 L659.3,396.9 L660.6,397.0 L661.9,397.1 L663.3,397.2 L664.6,397.1 L665.8,397.0 L667.1,396.9 L668.3,396.7 L669.5,396.4 L670.7,396.1 L671.8,395.7 L672.9,395.2 L673.9,394.7 L674.9,394.1 L675.8,393.5 L676.7,392.9 L677.5,392.1 L678.3,391.4 L679.0,390.6 L679.6,389.7 L680.2,388.8Z" fill="#262627"/><ellipse cx="659.18" cy="370.11" rx="27.64" ry="20.40" transform="rotate(30.90 659.18 370.11)" fill="#343435" stroke="#161616" stroke-width="0.6"/><ellipse cx="670.5" cy="385.6" rx="1.7" ry="1.3" fill="#4a4a55" stroke="#141414" stroke-width="0.5"/><ellipse cx="663.7" cy="386.7" rx="1.7" ry="1.3" fill="#4a4a55" stroke="#141414" stroke-width="0.5"/><ellipse cx="656.2" cy="385.3" rx="1.7" ry="1.3" fill="#4a4a55" stroke="#141414" stroke-width="0.5"/><path d="M671.7,370.2 L671.9,369.9 L672.1,369.5 L672.2,369.1 L672.3,368.7 L672.4,368.3 L672.5,367.9 L672.5,367.4 L672.6,367.0 L672.5,366.5 L672.5,366.1 L672.4,365.6 L672.3,365.2 L672.2,364.7 L672.1,364.2 L671.9,363.8 L671.7,363.3 L671.4,362.9 L671.2,362.4 L670.9,362.0 L670.6,361.5 L670.3,361.1 L669.9,360.7 L669.6,360.3 L669.2,359.9 L668.8,359.5 L668.4,359.2 L667.9,358.8 L667.5,358.5 L667.0,358.2 L666.5,357.9 L666.0,357.6 L665.5,357.3 L665.0,357.1 L664.5,356.8 L664.0,356.7 L663.4,356.5 L662.9,356.3 L662.4,356.2 L661.9,356.1 L661.3,356.0 L660.8,355.9 L660.3,355.9 L659.8,355.9 L659.3,355.9 L658.8,355.9 L658.3,356.0 L657.8,356.1 L657.3,356.2 L656.9,356.3 L656.4,356.5 L656.0,356.6 L655.6,356.8 L655.2,357.1 L654.9,357.3 L654.5,357.6 L654.2,357.8 L653.9,358.1 L653.6,358.5 L653.4,358.8 L653.1,359.1 L649.9,364.6 L649.7,364.9 L649.5,365.3 L649.4,365.7 L649.3,366.1 L649.2,366.5 L649.1,366.9 L649.1,367.4 L649.0,367.8 L649.1,368.3 L649.1,368.7 L649.2,369.2 L649.3,369.6 L649.4,370.1 L649.5,370.6 L649.7,371.0 L649.9,371.5 L650.2,371.9 L650.4,372.4 L650.7,372.8 L651.0,373.3 L651.3,373.7 L651.7,374.1 L652.0,374.5 L652.4,374.9 L652.8,375.3 L653.2,375.7 L653.7,376.0 L654.1,376.3 L654.6,376.7 L655.1,377.0 L655.6,377.2 L656.1,377.5 L656.6,377.7 L657.1,378.0 L657.6,378.2 L658.1,378.3 L658.7,378.5 L659.2,378.6 L659.7,378.7 L660.3,378.8 L660.8,378.9 L661.3,378.9 L661.8,378.9 L662.3,378.9 L662.8,378.9 L663.3,378.8 L663.8,378.7 L664.3,378.6 L664.7,378.5 L665.2,378.3 L665.6,378.2 L666.0,378.0 L666.4,377.7 L666.7,377.5 L667.1,377.2 L667.4,377.0 L667.7,376.7 L668.0,376.3 L668.2,376.0 L668.5,375.7Z" fill="#29292a" stroke="#141414" stroke-width="0.5"/><path d="M702.8,384.4 L715.6,384.0 L720.8,375.2 L708.0,375.7Z" fill="#1169a0" stroke="#14101c" stroke-width="0.35" stroke-linejoin="round"/><path d="M601.7,381.2 L614.9,382.3 L620.2,373.5 L606.9,372.5Z" fill="#126ea7" stroke="#14101c" stroke-width="0.35" stroke-linejoin="round"/><path d="M614.9,382.3 L624.4,395.3 L629.6,386.6 L620.2,373.5Z" fill="#1271aa" stroke="#14101c" stroke-width="0.35" stroke-linejoin="round"/><path d="M601.6,343.1 L612.7,352.1 L617.9,343.4 L606.8,334.4Z" fill="#1478b4" stroke="#14101c" stroke-width="0.35" stroke-linejoin="round"/><path d="M612.7,352.1 L610.2,364.9 L615.4,356.1 L617.9,343.4Z" fill="#0b466f" stroke="#14101c" stroke-width="0.35" stroke-linejoin="round"/><path d="M633.7,323.5 L636.1,335.1 L641.3,326.4 L638.9,314.7Z" fill="#0f5c8e" stroke="#14101c" stroke-width="0.35" stroke-linejoin="round"/><path d="M688.5,353.9 L694.8,345.4 L700.0,336.6 L693.8,345.2Z" fill="#083557" stroke="#14101c" stroke-width="0.35" stroke-linejoin="round"/><path d="M633.8,415.5 L641.5,408.0 L646.8,399.2 L639.1,406.8Z" fill="#0a4167" stroke="#14101c" stroke-width="0.35" stroke-linejoin="round"/><path d="M641.5,408.0 L644.4,408.3 L649.6,399.6 L646.8,399.2Z" fill="#1270aa" stroke="#14101c" stroke-width="0.35" stroke-linejoin="round"/><path d="M664.5,383.6 L687.8,409.8 L693.0,401.1 L669.7,374.9Z" fill="#1374af" stroke="#14101c" stroke-width="0.35" stroke-linejoin="round"/><path d="M687.8,409.8 L689.9,409.1 L695.1,400.4 L693.0,401.1Z" fill="#0f5b8c" stroke="#14101c" stroke-width="0.35" stroke-linejoin="round"/><path d="M689.9,409.1 L701.8,417.1 L707.0,408.4 L695.1,400.4Z" fill="#1479b6" stroke="#14101c" stroke-width="0.35" stroke-linejoin="round"/><path d="M727.9,389.6 L727.2,392.4 L726.4,395.0 L725.4,397.6 L724.3,400.1 L722.9,402.6 L721.4,404.9 L719.8,407.1 L718.0,409.2 L716.0,411.2 L713.9,413.0 L711.6,414.7 L709.2,416.3 L706.6,417.8 L704.0,419.1 L701.2,420.2 L698.3,421.3 L695.3,422.1 L692.3,422.8 L689.1,423.4 L685.9,423.8 L682.6,424.0 L679.2,424.1 L675.8,424.0 L672.4,423.8 L668.9,423.4 L665.4,422.8 L661.9,422.1 L658.4,421.2 L654.9,420.2 L651.4,419.0 L648.0,417.7 L644.6,416.3 L641.2,414.7 L637.9,413.0 L634.6,411.1 L631.5,409.1 L628.4,407.0 L625.4,404.8 L622.5,402.5 L619.7,400.1 L617.0,397.6 L614.5,395.0 L612.1,392.3 L609.8,389.5 L607.6,386.7 L605.7,383.8 L603.8,380.9 L602.1,378.0 L600.6,375.0 L599.3,371.9 L598.1,368.9 L597.1,365.9 L596.2,362.8 L595.6,359.8 L595.1,356.8 L594.8,353.8 L594.7,350.8 L594.8,347.9 L595.1,345.0 L595.5,342.2 L596.2,339.4 L597.0,336.8 L598.0,334.2 L599.1,331.7 L600.5,329.2 L602.0,326.9 L603.6,324.7 L605.4,322.6 L607.4,320.6 L609.5,318.8 L611.8,317.1 L614.2,315.5 L616.8,314.0 L619.4,312.7 L622.2,311.6 L625.1,310.5 L628.1,309.7 L631.1,309.0 L634.3,308.4 L637.5,308.0 L640.8,307.8 L644.2,307.7 L647.6,307.8 L651.0,308.0 L654.5,308.4 L658.0,309.0 L661.5,309.7 L665.0,310.6 L668.5,311.6 L672.0,312.8 L675.4,314.1 L678.8,315.5 L682.2,317.1 L685.5,318.8 L688.8,320.7 L691.9,322.7 L695.0,324.8 L698.0,327.0 L700.9,329.3 L703.7,331.7 L706.4,334.2 L708.9,336.8 L711.3,339.5 L713.6,342.3 L715.8,345.1 L717.7,348.0 L719.6,350.9 L721.3,353.8 L722.8,356.8 L724.1,359.9 L725.3,362.9 L726.3,365.9 L727.2,369.0 L727.8,372.0 L728.3,375.0 L728.6,378.0 L728.7,381.0 L728.6,383.9 L728.3,386.8Z M720.8,375.2 L721.0,377.1 L721.1,378.9 L721.0,380.7 L720.9,382.5 L720.8,384.3 L720.5,386.1 L720.2,387.8 L719.8,389.5 L719.3,391.1 L718.7,392.8 L718.1,394.3 L717.4,395.9 L716.6,397.4 L705.5,388.4 L708.0,375.7Z M623.4,395.2 L621.7,393.6 L620.2,392.0 L618.6,390.3 L617.2,388.7 L615.8,387.0 L614.4,385.2 L613.2,383.5 L611.9,381.7 L610.8,379.9 L609.7,378.1 L608.7,376.2 L607.8,374.4 L606.9,372.5 L620.2,373.5 L629.6,386.6Z M602.6,356.6 L602.4,354.7 L602.3,352.9 L602.4,351.1 L602.5,349.3 L602.6,347.5 L602.9,345.7 L603.2,344.0 L603.6,342.3 L604.1,340.7 L604.7,339.0 L605.3,337.5 L606.0,335.9 L606.8,334.4 L617.9,343.4 L615.4,356.1Z M616.4,323.4 L617.8,322.4 L619.3,321.4 L620.8,320.5 L622.4,319.6 L624.1,318.8 L625.8,318.1 L627.6,317.4 L629.3,316.8 L631.2,316.2 L633.1,315.8 L635.0,315.4 L636.9,315.0 L638.9,314.7 L641.3,326.4 L628.3,331.4Z M656.8,315.2 L658.9,315.5 L661.1,316.0 L663.3,316.5 L665.4,317.1 L667.6,317.7 L669.7,318.4 L671.9,319.2 L674.0,320.0 L676.1,320.9 L678.2,321.8 L680.3,322.9 L682.3,323.9 L684.3,325.0 L676.6,332.6 L660.8,326.9Z M700.0,336.6 L701.7,338.2 L703.2,339.8 L704.8,341.5 L706.2,343.1 L707.6,344.8 L709.0,346.6 L710.2,348.3 L711.5,350.1 L712.6,351.9 L713.7,353.7 L714.7,355.6 L715.6,357.4 L716.5,359.3 L703.2,358.3 L693.8,345.2Z M707.0,408.4 L705.6,409.4 L704.2,410.3 L702.7,411.2 L701.2,412.1 L699.6,412.8 L698.0,413.6 L696.4,414.2 L694.7,414.8 L692.9,415.4 L691.1,415.8 L689.3,416.3 L687.4,416.6 L685.6,416.9 L683.6,417.2 L681.7,417.3 L679.7,417.4 L677.7,417.5 L675.7,417.5 L673.7,417.4 L671.7,417.2 L669.6,417.0 L667.5,416.8 L665.5,416.4 L663.4,416.0 L661.3,415.6 L659.2,415.1 L657.2,414.5 L655.1,413.9 L653.0,413.2 L651.0,412.4 L649.0,411.6 L646.9,410.7 L644.9,409.8 L642.9,408.9 L641.0,407.8 L639.1,406.8 L646.8,399.2 L649.6,399.6 L658.5,374.6 L657.3,374.0 L656.2,373.3 L655.2,372.6 L654.2,371.7 L653.3,370.8 L652.5,369.8 L651.8,368.8 L651.2,367.8 L650.7,366.7 L650.4,365.7 L650.1,364.6 L650.0,363.6 L650.0,362.5 L650.2,361.6 L650.5,360.6 L650.9,359.7 L651.4,358.9 L652.0,358.2 L652.8,357.5 L653.6,357.0 L654.5,356.5 L655.5,356.2 L656.6,355.9 L657.8,355.8 L658.9,355.7 L660.1,355.8 L661.4,356.0 L662.6,356.3 L663.8,356.7 L665.0,357.2 L666.2,357.9 L667.3,358.5 L668.3,359.3 L669.3,360.2 L670.2,361.1 L671.0,362.1 L671.7,363.1 L672.3,364.1 L672.7,365.2 L673.1,366.2 L673.3,367.3 L673.4,368.3 L673.4,369.4 L673.2,370.3 L672.9,371.3 L672.5,372.2 L672.0,373.0 L671.3,373.7 L670.6,374.3 L669.7,374.9 L693.0,401.1 L695.1,400.4Z M658.7,349.9 L658.4,350.4 L657.7,350.7 L656.9,350.5 L656.2,350.1 L655.7,349.4 L655.6,348.8 L656.0,348.2 L656.6,348.0 L657.4,348.1 L658.2,348.5 L658.6,349.2Z" fill="#0e8fd6" fill-rule="evenodd" stroke="#14101c" stroke-width="0.5" stroke-linejoin="round"/><polygon points="655.2,349.3 657.2,347.7 659.2,349.3 657.2,350.9" fill="#5c5c8c" stroke="#10202c" stroke-width="0.5"/><ellipse cx="643.9" cy="365.5" rx="2.0" ry="1.6" transform="rotate(30 643.9 365.5)" fill="#d9d6d0" stroke="#3a3a3a" stroke-width="0.5"/><ellipse cx="679.5" cy="366.3" rx="2.0" ry="1.6" transform="rotate(30 679.5 366.3)" fill="#d9d6d0" stroke="#3a3a3a" stroke-width="0.5"/><path d="M671.7,370.2 L671.9,369.9 L672.1,369.5 L672.2,369.1 L672.3,368.7 L672.4,368.3 L672.5,367.9 L672.5,367.4 L672.6,367.0 L672.5,366.5 L672.5,366.1 L672.4,365.6 L672.3,365.2 L672.2,364.7 L672.1,364.2 L671.9,363.8 L671.7,363.3 L671.4,362.9 L671.2,362.4 L670.9,362.0 L670.6,361.5 L670.3,361.1 L669.9,360.7 L669.6,360.3 L669.2,359.9 L668.8,359.5 L668.4,359.2 L667.9,358.8 L667.5,358.5 L667.0,358.2 L666.5,357.9 L666.0,357.6 L665.5,357.3 L665.0,357.1 L664.5,356.8 L664.0,356.7 L663.4,356.5 L662.9,356.3 L662.4,356.2 L661.9,356.1 L661.3,356.0 L660.8,355.9 L660.3,355.9 L659.8,355.9 L659.3,355.9 L658.8,355.9 L658.3,356.0 L657.8,356.1 L657.3,356.2 L656.9,356.3 L656.4,356.5 L656.0,356.6 L655.6,356.8 L655.2,357.1 L654.9,357.3 L654.5,357.6 L654.2,357.8 L653.9,358.1 L653.6,358.5 L653.4,358.8 L653.1,359.1 L652.2,360.7 L652.0,361.0 L651.9,361.4 L651.7,361.8 L651.6,362.2 L651.5,362.6 L651.4,363.0 L651.4,363.5 L651.4,363.9 L651.4,364.4 L651.4,364.8 L651.5,365.3 L651.6,365.7 L651.7,366.2 L651.9,366.7 L652.1,367.1 L652.3,367.6 L652.5,368.0 L652.8,368.5 L653.0,368.9 L653.3,369.4 L653.7,369.8 L654.0,370.2 L654.4,370.6 L654.8,371.0 L655.2,371.4 L655.6,371.7 L656.0,372.1 L656.5,372.4 L656.9,372.7 L657.4,373.0 L657.9,373.3 L658.4,373.6 L658.9,373.8 L659.4,374.0 L660.0,374.2 L660.5,374.4 L661.0,374.6 L661.5,374.7 L662.1,374.8 L662.6,374.9 L663.1,375.0 L663.7,375.0 L664.2,375.0 L664.7,375.0 L665.2,375.0 L665.7,374.9 L666.1,374.8 L666.6,374.7 L667.1,374.6 L667.5,374.4 L667.9,374.3 L668.3,374.1 L668.7,373.8 L669.1,373.6 L669.4,373.3 L669.7,373.1 L670.0,372.8 L670.3,372.4 L670.6,372.1 L670.8,371.7Z" fill="#29292a"/><ellipse cx="662.42" cy="364.70" rx="10.81" ry="7.97" transform="rotate(30.90 662.42 364.70)" fill="#2e2e2f" stroke="#131313" stroke-width="0.6"/><ellipse cx="662.42" cy="364.70" rx="7.27" ry="5.37" transform="rotate(30.90 662.42 364.70)" fill="#1d1d1e" stroke="#111" stroke-width="0.6"/><ellipse cx="661.16" cy="366.80" rx="5.19" ry="3.83" transform="rotate(30.90 661.16 366.80)" fill="#262627" stroke="#3a3a3a" stroke-width="0.4"/></svg>
<svg class="abs" style="left:236px;top:43px" width="564" height="431" viewBox="236 43 564 431"><path d="M506.6,247.4l4.6,0" stroke="#c02020" stroke-width="1.1"/><text x="513.6" y="248.0" font-family="Liberation Sans" font-size="4.6" fill="#2a2a3a">x</text><path d="M506.6,247.4l0,-6.2" stroke="#1a1ac0" stroke-width="1.1"/><text x="507.40000000000003" y="241.0" font-family="Liberation Sans" font-size="4.6" fill="#2a2a3a">Z</text><path d="M788.5,247.2l-5.9,3.7" stroke="#a02020" stroke-width="1.1"/><text x="783.3" y="251.39999999999998" font-family="Liberation Sans" font-size="4.6" fill="#2a2a3a">x</text><path d="M788.5,247.2l4.9,4.2" stroke="#1fa030" stroke-width="1.1"/><text x="794.3" y="252.2" font-family="Liberation Sans" font-size="4.6" fill="#2a2a3a">Y</text><path d="M788.5,247.2l0,-5.8" stroke="#1a1ac0" stroke-width="1.1"/><text x="789.3" y="241.2" font-family="Liberation Sans" font-size="4.6" fill="#2a2a3a">Z</text><path d="M506.5,462.1l6.6,0" stroke="#c02020" stroke-width="1.1"/><text x="514.1" y="462.70000000000005" font-family="Liberation Sans" font-size="4.6" fill="#2a2a3a">X</text><path d="M506.5,462.1l0,-6.8" stroke="#1fa030" stroke-width="1.1"/><text x="507.7" y="455.5" font-family="Liberation Sans" font-size="4.6" fill="#2a2a3a">Y</text><rect x="505.9" y="461.4" width="1.3" height="1.3" fill="#1a1ac0"/><path d="M788.3,462.7l5.7,1.5" stroke="#c02020" stroke-width="1.1"/><text x="794.9" y="465.3" font-family="Liberation Sans" font-size="4.6" fill="#2a2a3a">X</text><path d="M788.3,462.7l-1.2,4.8" stroke="#1fa030" stroke-width="1.1"/><path d="M788.3,462.7l-1.6,1.8" stroke="#1a1ac0" stroke-width="1.1"/><path d="M789,465.4v2.2" stroke="#555" stroke-width="0.8"/></svg>
<div class="abs" style="left:236px;top:473.6px;width:564px;height:13.4px;background:#eceae8"></div>
<div class="abs" style="left:583.4px;top:474px;width:201px;height:13px;background:#fcfcfb;border:0.6px solid #cfccc8;border-bottom:none;border-radius:2px 2px 0 0"></div>
<div class="abs" style="left:377.4px;top:475px;width:0.6px;height:11px;background:#d6d3cf"></div>
<div class="txt" style="left:236.9px;top:476.6px;">-open-hardware-logo-futaba3003-assembly : 1</div>
<div class="txt" style="left:392.2px;top:476.6px;">Miniskybot-wheel-open-hardware-logo-futaba3003-assembly : 2</div>
<div class="txt" style="left:596px;top:476.6px;">Miniskybot-wheel-open-hardware-logo-futaba3003-assembly : 3</div>
<svg class="abs" style="left:236px;top:473px" width="564" height="15" viewBox="236 473 564 15"><path d="M370.5,479l3,3M373.5,479l-3,3" stroke="#4a4a48" stroke-width="1"/><path d="M573.7,479l3,3M576.7,479l-3,3" stroke="#4a4a48" stroke-width="1"/><path d="M777.3,479l3,3M780.3,479l-3,3" stroke="#4a4a48" stroke-width="1"/><g transform="translate(381.6,477.2) scale(0.95)"><g><path d="M0,0h3.6v1.5h-2v1.2h1.5v1.4h-1.5v2.3h-1.6z" fill="#e8331a"/><rect x="-0.55" y="-2.7" width="1.1" height="1.2" fill="#1c3aa8" transform="translate(4.7,4.2) rotate(0)"/><rect x="-0.55" y="-2.7" width="1.1" height="1.2" fill="#1c3aa8" transform="translate(4.7,4.2) rotate(45)"/><rect x="-0.55" y="-2.7" width="1.1" height="1.2" fill="#1c3aa8" transform="translate(4.7,4.2) rotate(90)"/><rect x="-0.55" y="-2.7" width="1.1" height="1.2" fill="#1c3aa8" transform="translate(4.7,4.2) rotate(135)"/><rect x="-0.55" y="-2.7" width="1.1" height="1.2" fill="#1c3aa8" transform="translate(4.7,4.2) rotate(180)"/><rect x="-0.55" y="-2.7" width="1.1" height="1.2" fill="#1c3aa8" transform="translate(4.7,4.2) rotate(225)"/><rect x="-0.55" y="-2.7" width="1.1" height="1.2" fill="#1c3aa8" transform="translate(4.7,4.2) rotate(270)"/><rect x="-0.55" y="-2.7" width="1.1" height="1.2" fill="#1c3aa8" transform="translate(4.7,4.2) rotate(315)"/><circle cx="4.7" cy="4.2" r="1.9" fill="#1c3aa8"/><circle cx="4.7" cy="4.2" r="0.8" fill="#e8e8f4"/></g></g><g transform="translate(585.4,477.2) scale(0.95)"><g><path d="M0,0h3.6v1.5h-2v1.2h1.5v1.4h-1.5v2.3h-1.6z" fill="#e8331a"/><rect x="-0.55" y="-2.7" width="1.1" height="1.2" fill="#1c3aa8" transform="translate(4.7,4.2) rotate(0)"/><rect x="-0.55" y="-2.7" width="1.1" height="1.2" fill="#1c3aa8" transform="translate(4.7,4.2) rotate(45)"/><rect x="-0.55" y="-2.7" width="1.1" height="1.2" fill="#1c3aa8" transform="translate(4.7,4.2) rotate(90)"/><rect x="-0.55" y="-2.7" width="1.1" height="1.2" fill="#1c3aa8" transform="translate(4.7,4.2) rotate(135)"/><rect x="-0.55" y="-2.7" width="1.1" height="1.2" fill="#1c3aa8" transform="translate(4.7,4.2) rotate(180)"/><rect x="-0.55" y="-2.7" width="1.1" height="1.2" fill="#1c3aa8" transform="translate(4.7,4.2) rotate(225)"/><rect x="-0.55" y="-2.7" width="1.1" height="1.2" fill="#1c3aa8" transform="translate(4.7,4.2) rotate(270)"/><rect x="-0.55" y="-2.7" width="1.1" height="1.2" fill="#1c3aa8" transform="translate(4.7,4.2) rotate(315)"/><circle cx="4.7" cy="4.2" r="1.9" fill="#1c3aa8"/><circle cx="4.7" cy="4.2" r="0.8" fill="#e8e8f4"/></g></g><rect x="787.6" y="475.4" width="5.6" height="10.4" rx="1" fill="#f8f7f6" stroke="#cfccc8" stroke-width="0.5"/><rect x="793.6" y="475.4" width="5.6" height="10.4" rx="1" fill="#f8f7f6" stroke="#cfccc8" stroke-width="0.5"/><polygon points="791.4,479.2 789.4,480.6 791.4,482" fill="#555"/><polygon points="795.6,479.2 797.6,480.6 795.6,482" fill="#555"/><path d="M793.4,478v5.2" stroke="#2a4ad0" stroke-width="0.6" stroke-dasharray="1,0.6"/></svg>
</body></html>
